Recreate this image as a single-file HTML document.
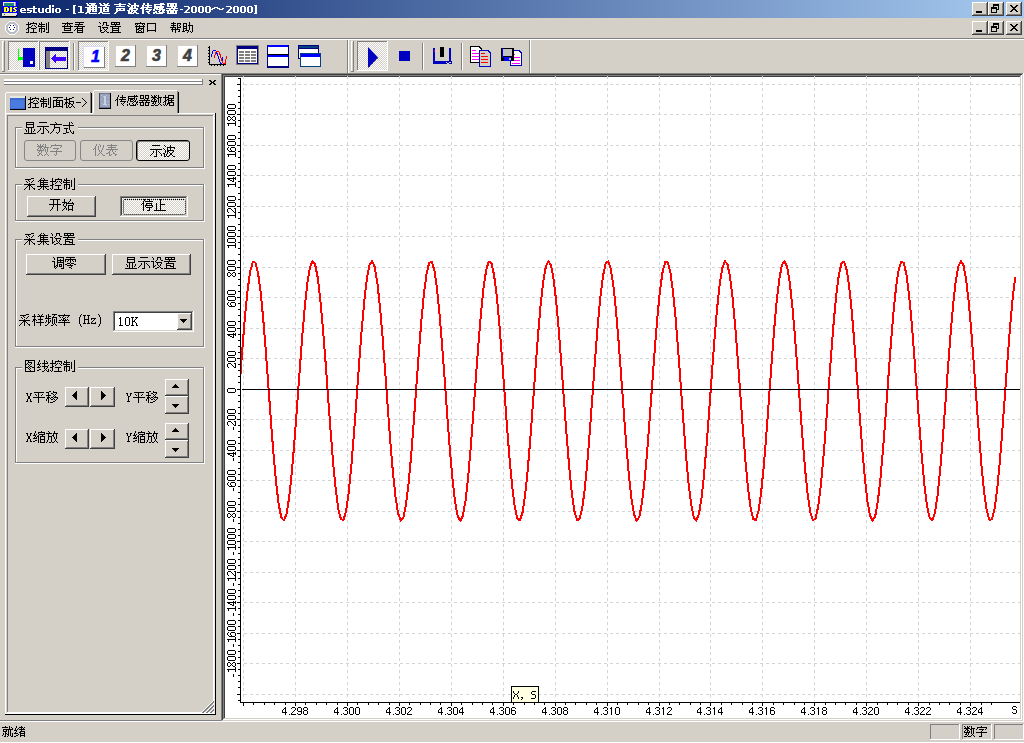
<!DOCTYPE html>
<html><head><meta charset="utf-8"><style>
html,body{margin:0;padding:0;width:1024px;height:743px;overflow:hidden;background:#d4d0c8}
body>div,body>svg,body>span{position:absolute;display:block}
body>span{white-space:nowrap}
svg{overflow:visible}
</style></head><body>
<div style="left:0px;top:0px;width:1024px;height:743px;background:#d4d0c8;"></div>
<div style="left:0px;top:0px;width:1024px;height:18px;background:linear-gradient(90deg,#0a246a,#a6caf0);"></div>
<svg style="left:0px;top:0px" width="20" height="18" shape-rendering="crispEdges">
<rect x="2" y="1" width="16" height="15" fill="#0000f0"/>
<rect x="3" y="2" width="13" height="4" fill="#f0ece0"/>
<rect x="15" y="2" width="1" height="4" fill="#a8a098"/>
<rect x="4" y="3" width="10" height="3" fill="#208878"/>
<rect x="8" y="5" width="1" height="1" fill="#00ff00"/>
<rect x="3" y="6" width="15" height="7" fill="#0000ff"/>
<path fill="#ffff00" d="M4 7h4v1h-4zM4 8h2v3h-2zM7 8h2v3h-2zM4 11h4v1h-4zM10 7h2v5h-2zM14 7h3v1h-3zM13 8h2v1h-2zM14 9h2v1h-2zM15 10h2v1h-2zM13 11h3v1h-3z"/>
<rect x="2" y="12" width="1" height="2" fill="#000"/>
<rect x="2" y="13" width="15" height="3" fill="#e8e4d8"/>
<rect x="4" y="14" width="1" height="1" fill="#008000"/>
<rect x="3" y="16" width="14" height="1" fill="#000"/>
<rect x="16" y="15" width="1" height="1" fill="#000"/>
</svg>
<svg style="left:19px;top:-3px" width="70" height="24"><path fill="#fff" d="M33 8h2v2h-2zM14 9h2v2h-2zM30 8h2v3h-2zM1 12h2v1h-2zM27 11h5v1h-5zM37 11h4v1h-4zM54 8h3v1h-3zM30 12h2v3h-2zM33 11h2v5h-2zM54 16h3v1h-3zM14 12h2v3h-2zM54 9h2v7h-2zM59 9h4v1h-4zM61 10h2v5h-2zM2 11h4v1h-4zM8 11h10v1h-10zM19 11h2v4h-2zM23 11h2v4h-2zM27 15h5v1h-5zM37 15h4v1h-4zM1 14h2v1h-2zM5 12h2v1h-2zM8 12h2v1h-2zM26 12h2v3h-2zM36 12h2v3h-2zM40 12h2v3h-2zM47 12h3v1h-3zM1 13h6v1h-6zM8 13h5v1h-5zM11 14h2v1h-2zM2 15h5v1h-5zM8 15h4v1h-4zM14 15h4v1h-4zM20 15h5v1h-5zM59 15h6v1h-6z"/></svg>
<svg style="left:85px;top:1px" width="26" height="20"><path fill="#fff" d="M7 5h2v1h-2zM10 5h2v1h-2zM15 3h2v1h-2zM18 2h2v1h-2zM22 2h2v1h-2zM2 4h10v1h-10zM18 6h6v1h-6zM2 7h4v1h-4zM7 7h2v1h-2zM10 7h2v1h-2zM18 7h2v1h-2zM22 7h2v1h-2zM18 8h6v1h-6zM1 2h2v1h-2zM4 2h7v1h-7zM14 2h2v1h-2zM18 9h2v1h-2zM22 9h2v1h-2zM2 3h2v1h-2zM6 3h4v1h-4zM15 7h2v4h-2zM19 3h4v1h-4zM2 8h10v1h-10zM15 4h10v1h-10zM4 5h2v1h-2zM7 9h2v1h-2zM10 9h2v1h-2zM20 5h2v1h-2zM0 6h12v1h-12zM13 6h4v1h-4zM18 10h6v1h-6zM2 9h4v2h-4zM7 10h5v1h-5zM1 11h4v1h-4zM14 11h4v1h-4zM0 12h2v1h-2zM4 12h8v1h-8zM13 12h2v1h-2zM17 12h8v1h-8z"/></svg>
<svg style="left:114px;top:1px" width="65" height="20"><path fill="#fff" d="M5 2h2v1h-2zM14 2h2v1h-2zM20 2h2v2h-2zM33 2h2v2h-2zM53 2h10v1h-10zM2 5h9v1h-9zM5 4h2v1h-2zM28 4h2v2h-2zM31 4h7v1h-7zM2 7h9v1h-9zM52 7h12v1h-12zM2 8h2v1h-2zM14 5h2v1h-2zM17 5h2v1h-2zM20 5h2v2h-2zM53 3h2v2h-2zM56 3h4v2h-4zM61 3h2v2h-2zM33 5h2v1h-2zM39 8h2v2h-2zM53 5h10v1h-10zM5 8h2v1h-2zM14 10h2v1h-2zM20 10h2v1h-2zM29 2h2v2h-2zM33 11h2v1h-2zM46 2h4v1h-4zM53 12h10v1h-10zM0 3h12v1h-12zM15 3h2v1h-2zM40 3h11v1h-11zM53 10h2v2h-2zM56 10h4v2h-4zM61 10h2v2h-2zM13 4h2v1h-2zM17 4h8v1h-8zM28 8h2v5h-2zM31 8h7v1h-7zM40 4h2v1h-2zM46 4h2v1h-2zM2 9h9v1h-9zM17 10h2v1h-2zM23 5h2v1h-2zM40 5h10v2h-10zM16 6h3v1h-3zM27 6h11v1h-11zM57 6h2v1h-2zM60 6h2v1h-2zM15 7h9v1h-9zM26 7h4v1h-4zM32 7h2v1h-2zM40 7h4v1h-4zM45 7h4v1h-4zM52 9h12v1h-12zM2 10h2v1h-2zM9 8h2v1h-2zM15 8h4v1h-4zM22 8h2v1h-2zM39 12h2v1h-2zM42 8h9v1h-9zM55 8h2v1h-2zM59 8h2v1h-2zM13 9h3v1h-3zM17 9h6v1h-6zM35 9h2v1h-2zM45 9h2v1h-2zM48 9h3v1h-3zM32 10h4v1h-4zM41 10h2v1h-2zM44 10h2v1h-2zM48 10h2v1h-2zM1 11h2v1h-2zM14 11h4v1h-4zM19 11h4v1h-4zM39 11h4v1h-4zM45 11h6v1h-6zM0 12h2v1h-2zM14 12h6v1h-6zM22 12h3v1h-3zM34 12h2v1h-2zM42 12h7v1h-7z"/></svg>
<svg style="left:179px;top:-3px" width="37" height="24"><path fill="#fff" d="M13 9h4v1h-4zM20 9h4v1h-4zM27 9h4v1h-4zM5 9h5v1h-5zM13 15h4v1h-4zM20 15h4v1h-4zM27 15h4v1h-4zM9 10h2v2h-2zM12 10h2v5h-2zM16 10h2v5h-2zM19 10h2v5h-2zM23 10h2v5h-2zM26 10h2v5h-2zM30 10h2v5h-2zM1 12h3v1h-3zM8 12h2v1h-2zM7 13h2v1h-2zM6 14h2v1h-2zM5 15h6v1h-6z"/></svg>
<svg style="left:211px;top:1px" width="14" height="20"><path fill="#fff" d="M3 6h4v1h-4zM1 7h3v1h-3zM6 7h3v1h-3zM11 7h2v1h-2zM0 8h2v1h-2zM8 8h4v1h-4z"/></svg>
<svg style="left:225px;top:-3px" width="38" height="24"><path fill="#fff" d="M9 9h4v1h-4zM16 9h4v1h-4zM23 9h4v1h-4zM29 8h3v1h-3zM29 16h3v1h-3zM1 9h5v1h-5zM9 15h4v1h-4zM16 15h4v1h-4zM23 15h4v1h-4zM30 9h2v7h-2zM5 10h2v2h-2zM8 10h2v5h-2zM12 10h2v5h-2zM15 10h2v5h-2zM19 10h2v5h-2zM22 10h2v5h-2zM26 10h2v5h-2zM4 12h2v1h-2zM3 13h2v1h-2zM2 14h2v1h-2zM1 15h6v1h-6z"/></svg>
<div style="left:972px;top:2px;width:16px;height:14px;background:#d4d0c8;"></div>
<div style="left:972px;top:2px;width:15px;height:1px;background:#ffffff;"></div>
<div style="left:972px;top:2px;width:1px;height:13px;background:#ffffff;"></div>
<div style="left:972px;top:15px;width:16px;height:1px;background:#404040;"></div>
<div style="left:987px;top:2px;width:1px;height:14px;background:#404040;"></div>
<div style="left:973px;top:14px;width:14px;height:1px;background:#808080;"></div>
<div style="left:986px;top:3px;width:1px;height:12px;background:#808080;"></div>
<div style="left:976px;top:11px;width:6px;height:2px;background:#000;"></div>
<div style="left:988px;top:2px;width:16px;height:14px;background:#d4d0c8;"></div>
<div style="left:988px;top:2px;width:15px;height:1px;background:#ffffff;"></div>
<div style="left:988px;top:2px;width:1px;height:13px;background:#ffffff;"></div>
<div style="left:988px;top:15px;width:16px;height:1px;background:#404040;"></div>
<div style="left:1003px;top:2px;width:1px;height:14px;background:#404040;"></div>
<div style="left:989px;top:14px;width:14px;height:1px;background:#808080;"></div>
<div style="left:1002px;top:3px;width:1px;height:12px;background:#808080;"></div>
<svg style="left:988px;top:2px" width="16" height="14" shape-rendering="crispEdges"><path fill="#000" d="M5 2h6v2h-6zM5 4h1v1h-1zM10 4h1v4h-1zM9 7h1v1h-1zM3 5h6v2h-6zM3 7h1v4h-1zM8 7h1v4h-1zM3 10h6v1h-6z"/></svg>
<div style="left:1006px;top:2px;width:16px;height:14px;background:#d4d0c8;"></div>
<div style="left:1006px;top:2px;width:15px;height:1px;background:#ffffff;"></div>
<div style="left:1006px;top:2px;width:1px;height:13px;background:#ffffff;"></div>
<div style="left:1006px;top:15px;width:16px;height:1px;background:#404040;"></div>
<div style="left:1021px;top:2px;width:1px;height:14px;background:#404040;"></div>
<div style="left:1007px;top:14px;width:14px;height:1px;background:#808080;"></div>
<div style="left:1020px;top:3px;width:1px;height:12px;background:#808080;"></div>
<svg style="left:1006px;top:2px" width="16" height="14" shape-rendering="crispEdges"><path fill="#000" d="M4 3h2v1h-2zM10 3h2v1h-2zM5 4h2v1h-2zM9 4h2v1h-2zM6 5h4v1h-4zM7 6h2v1h-2zM6 7h4v1h-4zM5 8h2v1h-2zM9 8h2v1h-2zM4 9h2v1h-2zM10 9h2v1h-2z"/></svg>
<svg style="left:5px;top:21px" width="15" height="15" shape-rendering="crispEdges">
<path fill="#ffffff" d="M4 0h6v1h1v1h1v1h1v1h1v6h-1v1h-1v1h-1v1h-1v1h-6v-1h-1v-1h-1v-1h-1v-1h-1v-6h1v-1h1v-1h1v-1h1z"/>
<path fill="#bcbcc4" d="M4 1h6v1h1v1h1v1h1v6h-1v1h-1v1h-1v1h-6v-1h-1v-1h-1v-1h-1v-6h1v-1h1v-1h1z"/>
<path fill="#ffffff" d="M5 3h4v1h1v1h1v4h-1v1h-1v1h-4v-1h-1v-1h-1v-4h1v-1h1z"/>
<path fill="#000080" d="M5 4h1v1h-1zM8 4h1v1h-1zM4 6h1v1h-1zM9 6h1v1h-1zM5 8h1v1h-1zM8 8h1v1h-1z"/>
</svg>
<svg style="left:26px;top:20px" width="24" height="20"><path fill="#000" d="M2 2h1v2h-1zM15 2h1v2h-1zM10 4h1v1h-1zM15 5h1v1h-1zM13 4h6v1h-6zM2 5h1v2h-1zM7 2h1v1h-1zM13 3h1v1h-1zM15 7h1v1h-1zM4 3h7v1h-7zM2 9h1v3h-1zM7 9h1v3h-1zM15 9h1v4h-1zM22 2h1v10h-1zM4 12h7v1h-7zM13 9h1v3h-1zM20 3h1v7h-1zM0 4h5v1h-5zM10 7h1v1h-1zM13 8h6v1h-6zM6 5h1v1h-1zM8 5h1v1h-1zM12 5h1v1h-1zM5 6h1v1h-1zM9 6h1v1h-1zM12 6h7v1h-7zM2 7h3v1h-3zM1 8h2v1h-2zM5 8h5v1h-5zM0 9h1v1h-1zM18 9h1v2h-1zM17 11h2v1h-2zM0 12h3v1h-3zM20 12h3v1h-3z"/></svg>
<svg style="left:62px;top:20px" width="24" height="20"><path fill="#000" d="M5 2h1v1h-1zM0 3h11v1h-11zM2 5h1v1h-1zM8 5h1v1h-1zM2 7h1v1h-1zM8 7h1v1h-1zM15 7h1v1h-1zM20 7h1v1h-1zM2 8h7v1h-7zM15 9h1v1h-1zM20 9h1v1h-1zM0 6h11v1h-11zM15 10h6v1h-6zM5 4h1v2h-1zM13 2h9v1h-9zM0 12h11v1h-11zM17 3h1v1h-1zM3 4h1v1h-1zM7 4h1v1h-1zM13 4h8v1h-8zM2 9h1v1h-1zM8 9h1v1h-1zM16 5h1v1h-1zM12 6h11v1h-11zM15 11h1v1h-1zM20 11h1v1h-1zM2 10h7v1h-7zM14 8h7v1h-7zM13 9h1v1h-1zM12 10h1v1h-1zM15 12h6v1h-6z"/></svg>
<svg style="left:98px;top:20px" width="24" height="20"><path fill="#000" d="M13 2h9v1h-9zM2 3h1v1h-1zM5 3h1v2h-1zM8 3h1v2h-1zM14 7h1v1h-1zM20 7h1v1h-1zM14 8h7v1h-7zM2 7h1v3h-1zM6 9h1v1h-1zM8 9h1v1h-1zM14 9h1v1h-1zM20 9h1v1h-1zM12 6h11v1h-11zM1 2h1v1h-1zM5 2h4v1h-4zM13 4h9v1h-9zM2 11h1v1h-1zM5 8h1v1h-1zM8 11h1v1h-1zM13 3h1v1h-1zM16 3h1v1h-1zM18 3h1v1h-1zM21 3h1v1h-1zM4 5h1v1h-1zM8 5h3v1h-3zM17 5h1v1h-1zM0 6h3v1h-3zM12 12h11v1h-11zM4 7h6v1h-6zM14 11h1v1h-1zM20 11h1v1h-1zM9 8h1v1h-1zM14 10h7v1h-7zM6 11h1v1h-1zM2 10h2v1h-2zM7 10h1v1h-1zM3 12h3v1h-3zM9 12h2v1h-2z"/></svg>
<svg style="left:134px;top:20px" width="23" height="20"><path fill="#000" d="M1 3h10v1h-10zM2 5h1v1h-1zM5 5h1v1h-1zM9 5h1v1h-1zM9 7h1v1h-1zM2 7h1v2h-1zM13 3h9v1h-9zM7 9h1v1h-1zM13 4h1v6h-1zM21 4h1v6h-1zM6 2h1v1h-1zM1 6h10v1h-10zM13 10h9v1h-9zM1 4h1v1h-1zM3 4h1v1h-1zM8 4h1v1h-1zM10 4h1v1h-1zM13 11h1v1h-1zM21 11h1v1h-1zM2 10h1v2h-1zM5 7h1v1h-1zM9 9h1v3h-1zM4 8h6v1h-6zM2 9h3v1h-3zM7 11h1v1h-1zM5 10h2v1h-2zM4 11h1v1h-1zM2 12h8v1h-8z"/></svg>
<svg style="left:170px;top:20px" width="24" height="20"><path fill="#000" d="M3 2h1v1h-1zM1 3h5v1h-5zM3 4h1v1h-1zM10 4h1v1h-1zM13 3h4v1h-4zM19 2h1v3h-1zM7 3h4v1h-4zM13 4h1v2h-1zM16 4h1v2h-1zM7 4h1v3h-1zM13 6h4v1h-4zM13 7h1v1h-1zM16 7h1v1h-1zM2 8h1v1h-1zM5 8h1v1h-1zM9 5h1v1h-1zM3 6h1v1h-1zM19 6h1v4h-1zM1 5h5v1h-5zM7 7h4v1h-4zM13 8h4v1h-4zM7 8h1v1h-1zM10 6h1v1h-1zM13 9h1v2h-1zM16 9h1v1h-1zM9 10h1v1h-1zM18 5h5v1h-5zM22 6h1v6h-1zM0 7h6v1h-6zM2 10h1v2h-1zM5 10h1v3h-1zM1 9h9v1h-9zM15 10h4v1h-4zM8 11h2v1h-2zM12 11h3v1h-3zM18 11h1v1h-1zM20 11h1v1h-1zM17 12h1v1h-1zM21 12h1v1h-1z"/></svg>
<div style="left:972px;top:21px;width:16px;height:14px;background:#d4d0c8;"></div>
<div style="left:972px;top:21px;width:15px;height:1px;background:#ffffff;"></div>
<div style="left:972px;top:21px;width:1px;height:13px;background:#ffffff;"></div>
<div style="left:972px;top:34px;width:16px;height:1px;background:#404040;"></div>
<div style="left:987px;top:21px;width:1px;height:14px;background:#404040;"></div>
<div style="left:973px;top:33px;width:14px;height:1px;background:#808080;"></div>
<div style="left:986px;top:22px;width:1px;height:12px;background:#808080;"></div>
<div style="left:976px;top:30px;width:6px;height:2px;background:#000;"></div>
<div style="left:988px;top:21px;width:16px;height:14px;background:#d4d0c8;"></div>
<div style="left:988px;top:21px;width:15px;height:1px;background:#ffffff;"></div>
<div style="left:988px;top:21px;width:1px;height:13px;background:#ffffff;"></div>
<div style="left:988px;top:34px;width:16px;height:1px;background:#404040;"></div>
<div style="left:1003px;top:21px;width:1px;height:14px;background:#404040;"></div>
<div style="left:989px;top:33px;width:14px;height:1px;background:#808080;"></div>
<div style="left:1002px;top:22px;width:1px;height:12px;background:#808080;"></div>
<svg style="left:988px;top:21px" width="16" height="14" shape-rendering="crispEdges"><path fill="#000" d="M5 2h6v2h-6zM5 4h1v1h-1zM10 4h1v4h-1zM9 7h1v1h-1zM3 5h6v2h-6zM3 7h1v4h-1zM8 7h1v4h-1zM3 10h6v1h-6z"/></svg>
<div style="left:1006px;top:21px;width:16px;height:14px;background:#d4d0c8;"></div>
<div style="left:1006px;top:21px;width:15px;height:1px;background:#ffffff;"></div>
<div style="left:1006px;top:21px;width:1px;height:13px;background:#ffffff;"></div>
<div style="left:1006px;top:34px;width:16px;height:1px;background:#404040;"></div>
<div style="left:1021px;top:21px;width:1px;height:14px;background:#404040;"></div>
<div style="left:1007px;top:33px;width:14px;height:1px;background:#808080;"></div>
<div style="left:1020px;top:22px;width:1px;height:12px;background:#808080;"></div>
<svg style="left:1006px;top:21px" width="16" height="14" shape-rendering="crispEdges"><path fill="#000" d="M4 3h2v1h-2zM10 3h2v1h-2zM5 4h2v1h-2zM9 4h2v1h-2zM6 5h4v1h-4zM7 6h2v1h-2zM6 7h4v1h-4zM5 8h2v1h-2zM9 8h2v1h-2zM4 9h2v1h-2zM10 9h2v1h-2z"/></svg>
<div style="left:0px;top:38px;width:1024px;height:1px;background:#808080;"></div>
<div style="left:0px;top:39px;width:1024px;height:1px;background:#ffffff;"></div>
<div style="left:2px;top:41px;width:1px;height:30px;background:#ffffff;"></div>
<div style="left:2px;top:41px;width:2px;height:1px;background:#ffffff;"></div>
<div style="left:4px;top:41px;width:1px;height:31px;background:#808080;"></div>
<div style="left:2px;top:71px;width:3px;height:1px;background:#808080;"></div>
<div style="left:9px;top:42px;width:29px;height:28px;background-color:#fff;background-image:conic-gradient(#d4d0c8 25%,#fff 0 50%,#d4d0c8 0 75%,#fff 0);background-size:2px 2px"></div>
<div style="left:8px;top:41px;width:31px;height:1px;background:#808080;"></div>
<div style="left:8px;top:41px;width:1px;height:29px;background:#808080;"></div>
<div style="left:8px;top:70px;width:31px;height:1px;background:#ffffff;"></div>
<div style="left:38px;top:41px;width:1px;height:30px;background:#ffffff;"></div>
<svg style="left:8px;top:41px" width="31" height="31" shape-rendering="crispEdges">
<rect x="15" y="7" width="12" height="19" fill="#0000c0"/>
<rect x="22" y="20" width="3" height="3" fill="#fff"/>
<rect x="10" y="8" width="1" height="12" fill="#00ff00"/>
<rect x="10" y="16" width="5" height="3" fill="#00ff00"/>
</svg>
<div style="left:40px;top:42px;width:29px;height:28px;background-color:#fff;background-image:conic-gradient(#d4d0c8 25%,#fff 0 50%,#d4d0c8 0 75%,#fff 0);background-size:2px 2px"></div>
<div style="left:39px;top:41px;width:31px;height:1px;background:#808080;"></div>
<div style="left:39px;top:41px;width:1px;height:29px;background:#808080;"></div>
<div style="left:39px;top:70px;width:31px;height:1px;background:#ffffff;"></div>
<div style="left:69px;top:41px;width:1px;height:30px;background:#ffffff;"></div>
<svg style="left:39px;top:41px" width="31" height="31" shape-rendering="crispEdges">
<path fill="#000080" d="M6 6h23v22h-23zM7 10v17h21v-17z"/>
<rect x="7" y="10" width="4" height="17" fill="#808080"/>
<path fill="#4000ff" d="M12 17.5l5-5v3h10v4h-10v3z"/>
</svg>
<div style="left:73px;top:43px;width:1px;height:27px;background:#808080;"></div>
<div style="left:74px;top:43px;width:1px;height:27px;background:#ffffff;"></div>
<div style="left:79px;top:42px;width:29px;height:28px;background-color:#fff;background-image:conic-gradient(#d4d0c8 25%,#fff 0 50%,#d4d0c8 0 75%,#fff 0);background-size:2px 2px"></div>
<div style="left:78px;top:41px;width:31px;height:1px;background:#808080;"></div>
<div style="left:78px;top:41px;width:1px;height:29px;background:#808080;"></div>
<div style="left:78px;top:70px;width:31px;height:1px;background:#ffffff;"></div>
<div style="left:108px;top:41px;width:1px;height:30px;background:#ffffff;"></div>
<svg style="left:83px;top:46px" width="22" height="22" shape-rendering="crispEdges">
<rect x="0" y="0" width="21" height="21" fill="#d8d8f8"/>
<rect x="1" y="1" width="20" height="20" fill="#fff"/>
<rect x="21" y="1" width="1" height="21" fill="#808080"/>
<rect x="1" y="21" width="21" height="1" fill="#808080"/>
</svg>
<span style="left:91px;top:47.5px;font:italic bold 16px/18px 'Liberation Sans',sans-serif;color:#0000ff;-webkit-text-stroke:0.6px #0000ff">1</span>
<svg style="left:115px;top:45px" width="21" height="22" shape-rendering="crispEdges"><rect x="1" y="1" width="19" height="20" fill="#fff"/><rect x="20" y="0" width="1" height="22" fill="#808080"/><rect x="0" y="21" width="21" height="1" fill="#808080"/></svg>
<span style="left:121px;top:47px;font:italic bold 16px/18px 'Liberation Sans',sans-serif;color:#404040;-webkit-text-stroke:0.6px #404040">2</span>
<svg style="left:146px;top:45px" width="21" height="22" shape-rendering="crispEdges"><rect x="1" y="1" width="19" height="20" fill="#fff"/><rect x="20" y="0" width="1" height="22" fill="#808080"/><rect x="0" y="21" width="21" height="1" fill="#808080"/></svg>
<span style="left:152px;top:47px;font:italic bold 16px/18px 'Liberation Sans',sans-serif;color:#404040;-webkit-text-stroke:0.6px #404040">3</span>
<svg style="left:177px;top:45px" width="21" height="22" shape-rendering="crispEdges"><rect x="1" y="1" width="19" height="20" fill="#fff"/><rect x="20" y="0" width="1" height="22" fill="#808080"/><rect x="0" y="21" width="21" height="1" fill="#808080"/></svg>
<span style="left:183px;top:47px;font:italic bold 16px/18px 'Liberation Sans',sans-serif;color:#404040;-webkit-text-stroke:0.6px #404040">4</span>
<svg style="left:204px;top:42px" width="28" height="28" shape-rendering="crispEdges"><path fill="#000" d="M5 4h1v19h-1zM5 22h17v1h-17z"/><path fill="#000" d="M4 5h1v1h-1zM4 8h1v1h-1zM4 11h1v1h-1zM4 14h1v1h-1zM4 17h1v1h-1zM4 20h1v1h-1zM7 23h1v1h-1zM10 23h1v1h-1zM13 23h1v1h-1zM16 23h1v1h-1zM19 23h1v1h-1z"/><path fill="#0000ff" d="M7 12h1v3h-1zM8 9h1v3h-1zM9 8h1v1h-1zM10 8h1v1h-1zM11 8h1v1h-1zM12 9h1v1h-1zM12 10h1v2h-1zM13 11h1v3h-1zM14 14h1v3h-1zM15 17h1v3h-1zM16 20h1v2h-1zM17 21h1v1h-1zM18 19h1v2h-1zM18 15h1v4h-1z"/><path fill="#ff0000" d="M10 13h1v3h-1zM11 10h1v3h-1zM12 9h1v1h-1zM13 9h1v1h-1zM14 9h1v1h-1zM15 10h1v1h-1zM15 11h1v2h-1zM16 12h1v4h-1zM17 16h1v3h-1zM18 19h1v2h-1zM19 21h1v1h-1zM20 21h1v1h-1zM21 20h1v2h-1zM21 17h1v3h-1zM22 14h1v3h-1z"/></svg>
<svg style="left:236px;top:45px" width="24" height="21" shape-rendering="crispEdges">
<rect x="0" y="0" width="23" height="20" fill="#808080"/>
<rect x="1" y="1" width="21" height="18" fill="#000080"/>
<rect x="1" y="19" width="22" height="1" fill="#808080"/>
<rect x="2" y="4" width="19" height="14" fill="#fff"/>
<path fill="#808080" d="M3 6h5v2h-5zM9 6h5v2h-5zM15 6h5v2h-5zM3 9h5v2h-5zM9 9h5v2h-5zM15 9h5v2h-5zM3 12h5v2h-5zM9 12h5v2h-5zM15 12h5v2h-5zM3 15h5v2h-5zM9 15h5v2h-5zM15 15h5v2h-5z"/>
</svg>
<svg style="left:267px;top:45px" width="22" height="23" shape-rendering="crispEdges">
<rect x="0" y="0" width="22" height="23" fill="#000080"/>
<rect x="1" y="0" width="20" height="2" fill="#0000ff"/>
<rect x="1" y="2" width="20" height="7" fill="#fff"/>
<rect x="0" y="9" width="22" height="1" fill="#000"/>
<rect x="1" y="10" width="20" height="2" fill="#0000ff"/>
<rect x="1" y="12" width="20" height="9" fill="#fff"/>
</svg>
<svg style="left:298px;top:45px" width="24" height="23" shape-rendering="crispEdges">
<rect x="0" y="0" width="21" height="14" fill="#000080"/>
<rect x="1" y="1" width="19" height="2" fill="#004080"/>
<rect x="1" y="4" width="19" height="9" fill="#fff"/>
<rect x="2" y="8" width="21" height="14" fill="#004080"/>
<rect x="3" y="9" width="19" height="3" fill="#0000ff"/>
<rect x="3" y="12" width="19" height="9" fill="#fff"/>
</svg>
<div style="left:347px;top:40px;width:1px;height:33px;background:#808080;"></div>
<div style="left:348px;top:40px;width:1px;height:33px;background:#ffffff;"></div>
<div style="left:351px;top:41px;width:1px;height:30px;background:#ffffff;"></div>
<div style="left:351px;top:41px;width:2px;height:1px;background:#ffffff;"></div>
<div style="left:353px;top:41px;width:1px;height:31px;background:#808080;"></div>
<div style="left:351px;top:71px;width:3px;height:1px;background:#808080;"></div>
<div style="left:358px;top:42px;width:29px;height:28px;background-color:#fff;background-image:conic-gradient(#d4d0c8 25%,#fff 0 50%,#d4d0c8 0 75%,#fff 0);background-size:2px 2px"></div>
<div style="left:357px;top:41px;width:31px;height:1px;background:#808080;"></div>
<div style="left:357px;top:41px;width:1px;height:29px;background:#808080;"></div>
<div style="left:357px;top:70px;width:31px;height:1px;background:#ffffff;"></div>
<div style="left:387px;top:41px;width:1px;height:30px;background:#ffffff;"></div>
<svg style="left:357px;top:41px" width="31" height="31">
<path d="M11 6L21 16.5L11 27z" fill="#0000c0"/>
<path d="M12 26L21 17" stroke="#000" stroke-width="1" stroke-dasharray="1 3" fill="none"/>
</svg>
<div style="left:399px;top:51px;width:11px;height:10px;background:#0000c0;"></div>
<div style="left:422px;top:43px;width:1px;height:27px;background:#808080;"></div>
<div style="left:423px;top:43px;width:1px;height:27px;background:#ffffff;"></div>
<svg style="left:432px;top:46px" width="22" height="20" shape-rendering="crispEdges">
<rect x="1" y="2" width="2" height="16" fill="#0000c0"/>
<rect x="1" y="15" width="19" height="3" fill="#0000c0"/>
<rect x="17" y="2" width="2" height="16" fill="#0000c0"/>
<rect x="8" y="1" width="4" height="10" fill="#000"/>
<path fill="#e8e8e8" d="M14 16h1v1h-1zM17 16h2v1h-2zM15 17h2v1h-2z"/>
<rect x="2" y="4" width="1" height="2" fill="#c00060"/>
</svg>
<div style="left:461px;top:43px;width:1px;height:27px;background:#808080;"></div>
<div style="left:462px;top:43px;width:1px;height:27px;background:#ffffff;"></div>
<svg style="left:470px;top:46px" width="24" height="22" shape-rendering="crispEdges">
<path fill="#000" d="M0 0h9l3 3v14h-12z"/>
<path fill="#fff" d="M1 1h7l3 3v12h-10z"/>
<path fill="#ff00ff" d="M2 4h4v1h-4zM2 7h7v1h-7zM2 10h7v1h-7zM2 13h7v1h-7z"/>
<path fill="#0000c0" d="M9 4h9l3 3v14h-12z"/>
<path fill="#d4d0c8" d="M10 5h7l3 3v12h-10z"/>
<path fill="#ff0000" d="M11 7h4v1h-4zM11 10h7v1h-7zM11 13h7v1h-7zM11 16h7v1h-7z"/>
</svg>
<svg style="left:500px;top:47px" width="24" height="21" shape-rendering="crispEdges">
<path fill="#0000c0" d="M10 3h9l3 3v13h-12z"/>
<path fill="#fff" d="M11 4h7l3 3v11h-10z"/>
<path fill="#ff00ff" d="M12 7h3v1h-3zM12 10h8v1h-8zM12 13h8v1h-8zM12 16h8v1h-8z"/>
<rect x="1" y="1" width="13" height="13" fill="#000"/>
<rect x="3" y="2" width="9" height="7" fill="#c0c0c0"/>
<rect x="2" y="1" width="1" height="10" fill="#0000ff"/>
<rect x="4" y="10" width="7" height="4" fill="#0000ff"/>
<rect x="9" y="11" width="2" height="2" fill="#c0c0c0"/>
</svg>
<div style="left:529px;top:40px;width:1px;height:33px;background:#808080;"></div>
<div style="left:530px;top:40px;width:1px;height:33px;background:#ffffff;"></div>
<div style="left:0px;top:73px;width:1024px;height:1px;background:#808080;"></div>
<div style="left:0px;top:74px;width:221px;height:1px;background:#ffffff;"></div>
<div style="left:4px;top:79px;width:198px;height:2px;background:#ffffff;"></div>
<div style="left:4px;top:81px;width:199px;height:1px;background:#808080;"></div>
<div style="left:4px;top:82px;width:198px;height:2px;background:#ffffff;"></div>
<div style="left:4px;top:84px;width:199px;height:1px;background:#808080;"></div>
<div style="left:202px;top:79px;width:1px;height:3px;background:#808080;"></div>
<div style="left:202px;top:82px;width:1px;height:3px;background:#808080;"></div>
<svg style="left:209px;top:80px" width="8" height="7" shape-rendering="crispEdges"><path fill="#000" d="M0 0h2v1h-2zM5 0h2v1h-2zM1 1h2v1h-2zM4 1h2v1h-2zM2 2h3v1h-3zM1 3h2v1h-2zM4 3h2v1h-2zM0 4h2v1h-2zM5 4h2v1h-2z"/></svg>
<div style="left:5px;top:113px;width:1px;height:602px;background:#ffffff;"></div>
<div style="left:5px;top:113px;width:210px;height:1px;background:#ffffff;"></div>
<div style="left:215px;top:113px;width:1px;height:602px;background:#000;"></div>
<div style="left:5px;top:714px;width:211px;height:1px;background:#000;"></div>
<div style="left:7px;top:115px;width:1px;height:597px;background:#808080;"></div>
<div style="left:7px;top:115px;width:206px;height:1px;background:#808080;"></div>
<div style="left:213px;top:115px;width:1px;height:598px;background:#ffffff;"></div>
<div style="left:214px;top:114px;width:1px;height:600px;background:#eae8e2;"></div>
<div style="left:7px;top:712px;width:207px;height:1px;background:#ffffff;"></div>
<div style="left:6px;top:713px;width:209px;height:1px;background:#ffffff;"></div>
<svg style="left:201px;top:700px" width="13" height="13" shape-rendering="crispEdges"><path fill="#fff" d="M12 0h1v1h-1zM11 1h1v1h-1zM10 2h1v1h-1zM9 3h1v1h-1zM8 4h1v1h-1zM12 4h1v1h-1zM7 5h1v1h-1zM11 5h1v1h-1zM6 6h1v1h-1zM10 6h1v1h-1zM5 7h1v1h-1zM9 7h1v1h-1zM4 8h1v1h-1zM8 8h1v1h-1zM12 8h1v1h-1zM3 9h1v1h-1zM7 9h1v1h-1zM11 9h1v1h-1zM2 10h1v1h-1zM6 10h1v1h-1zM10 10h1v1h-1zM1 11h1v1h-1zM5 11h1v1h-1zM9 11h1v1h-1zM0 12h1v1h-1zM4 12h1v1h-1zM8 12h1v1h-1z"/><path fill="#808080" d="M12 1h1v1h-1zM11 2h1v1h-1zM12 2h1v1h-1zM10 3h1v1h-1zM11 3h1v1h-1zM9 4h1v1h-1zM10 4h1v1h-1zM8 5h1v1h-1zM9 5h1v1h-1zM12 5h1v1h-1zM7 6h1v1h-1zM8 6h1v1h-1zM11 6h1v1h-1zM12 6h1v1h-1zM6 7h1v1h-1zM7 7h1v1h-1zM10 7h1v1h-1zM11 7h1v1h-1zM5 8h1v1h-1zM6 8h1v1h-1zM9 8h1v1h-1zM10 8h1v1h-1zM4 9h1v1h-1zM5 9h1v1h-1zM8 9h1v1h-1zM9 9h1v1h-1zM12 9h1v1h-1zM3 10h1v1h-1zM4 10h1v1h-1zM7 10h1v1h-1zM8 10h1v1h-1zM11 10h1v1h-1zM12 10h1v1h-1zM2 11h1v1h-1zM3 11h1v1h-1zM6 11h1v1h-1zM7 11h1v1h-1zM10 11h1v1h-1zM11 11h1v1h-1zM1 12h1v1h-1zM2 12h1v1h-1zM5 12h1v1h-1zM6 12h1v1h-1zM9 12h1v1h-1zM10 12h1v1h-1z"/></svg>
<div style="left:5px;top:93px;width:1px;height:20px;background:#ffffff;"></div>
<div style="left:6px;top:92px;width:84px;height:1px;background:#ffffff;"></div>
<div style="left:90px;top:92px;width:1px;height:21px;background:#808080;"></div>
<div style="left:91px;top:93px;width:1px;height:20px;background:#000;"></div>
<svg style="left:10px;top:96px" width="16" height="14" shape-rendering="crispEdges">
<rect x="0" y="0" width="16" height="14" fill="#000"/>
<rect x="0" y="0" width="15" height="2" fill="#e8e8e0"/>
<rect x="0" y="2" width="15" height="11" fill="#3c6cd0"/>
<rect x="1" y="4" width="13" height="8" fill="#4a7ce0"/>
</svg>
<svg style="left:28px;top:95px" width="60" height="20"><path fill="#000" d="M2 2h1v2h-1zM15 2h1v2h-1zM25 2h10v1h-10zM38 2h1v2h-1zM28 4h1v1h-1zM10 4h1v1h-1zM15 5h1v1h-1zM41 5h1v1h-1zM13 4h6v1h-6zM28 6h1v1h-1zM31 6h1v1h-1zM57 6h1v1h-1zM2 5h1v2h-1zM7 2h1v1h-1zM13 3h1v1h-1zM15 7h1v1h-1zM28 7h4v1h-4zM38 5h1v2h-1zM41 7h1v1h-1zM56 5h1v1h-1zM28 8h1v1h-1zM31 8h1v1h-1zM55 4h1v1h-1zM25 5h10v1h-10zM45 7h1v2h-1zM54 3h1v1h-1zM4 3h7v1h-7zM25 6h1v5h-1zM34 6h1v5h-1zM2 9h1v3h-1zM7 9h1v3h-1zM15 9h1v4h-1zM22 2h1v10h-1zM25 11h10v1h-10zM38 9h1v3h-1zM44 2h2v1h-2zM4 12h7v1h-7zM13 9h1v3h-1zM20 3h1v7h-1zM29 3h1v1h-1zM41 3h3v1h-3zM54 11h1v1h-1zM0 4h5v1h-5zM10 7h1v1h-1zM13 8h6v1h-6zM28 10h1v1h-1zM36 4h6v1h-6zM55 10h1v1h-1zM6 5h1v1h-1zM8 5h1v1h-1zM12 5h1v1h-1zM41 9h1v1h-1zM56 9h1v1h-1zM5 6h1v1h-1zM9 6h1v1h-1zM12 6h7v1h-7zM25 12h1v1h-1zM31 10h1v1h-1zM34 12h1v1h-1zM41 6h5v1h-5zM57 8h1v1h-1zM2 7h3v1h-3zM28 9h4v1h-4zM37 7h3v1h-3zM45 11h1v1h-1zM48 7h5v1h-5zM58 7h1v1h-1zM1 8h2v1h-2zM5 8h5v1h-5zM37 8h2v1h-2zM40 8h3v1h-3zM0 9h1v1h-1zM18 9h1v2h-1zM36 9h1v1h-1zM43 9h2v1h-2zM40 10h1v2h-1zM44 10h1v1h-1zM17 11h2v1h-2zM43 11h1v1h-1zM0 12h3v1h-3zM20 12h3v1h-3zM38 12h2v1h-2zM41 12h2v1h-2zM46 12h1v1h-1z"/></svg>
<div style="left:93px;top:90px;width:85px;height:24px;background:#d4d0c8;"></div>
<div style="left:93px;top:91px;width:1px;height:22px;background:#ffffff;"></div>
<div style="left:94px;top:90px;width:83px;height:1px;background:#ffffff;"></div>
<div style="left:177px;top:91px;width:1px;height:22px;background:#808080;"></div>
<div style="left:178px;top:92px;width:1px;height:21px;background:#000;"></div>
<svg style="left:99px;top:93px" width="12" height="16" shape-rendering="crispEdges">
<rect x="0" y="0" width="12" height="16" fill="#000"/>
<rect x="0" y="0" width="11" height="15" fill="#707898"/>
<rect x="1" y="1" width="10" height="13" fill="#9aa2bc"/>
<path fill="#b8c0d8" d="M2 2h1v1h-1zM4 3h1v1h-1zM7 2h1v1h-1zM9 4h1v1h-1zM2 6h1v1h-1zM8 8h1v1h-1zM3 10h1v1h-1zM6 12h1v1h-1zM9 11h1v1h-1z"/>
<path fill="#c8d0e4" d="M5 3h2v9h-2zM4 11h4v1h-4z"/>
<rect x="0" y="0" width="1" height="15" fill="#404860"/>
</svg>
<svg style="left:115px;top:93px" width="60" height="20"><path fill="#000" d="M19 2h1v1h-1zM7 2h1v2h-1zM21 2h1v1h-1zM25 2h4v1h-4zM30 2h4v1h-4zM50 2h1v2h-1zM53 2h6v1h-6zM13 4h1v1h-1zM19 4h1v1h-1zM37 3h1v1h-1zM39 3h2v1h-2zM43 2h1v2h-1zM2 4h1v2h-1zM36 2h1v1h-1zM39 2h1v1h-1zM41 2h1v1h-1zM53 5h6v1h-6zM5 4h6v1h-6zM15 6h3v1h-3zM36 4h6v1h-6zM53 3h1v1h-1zM56 6h1v1h-1zM18 7h1v1h-1zM50 5h1v2h-1zM53 7h6v1h-6zM6 7h1v1h-1zM21 5h1v2h-1zM25 3h1v2h-1zM28 3h1v2h-1zM30 3h1v2h-1zM33 3h1v2h-1zM58 3h1v2h-1zM7 5h1v1h-1zM12 8h1v2h-1zM18 9h1v1h-1zM20 7h1v1h-1zM22 8h1v1h-1zM39 7h1v1h-1zM43 6h1v4h-1zM45 5h1v5h-1zM48 9h1v1h-1zM8 10h1v1h-1zM25 5h4v1h-4zM30 5h4v1h-4zM3 2h1v2h-1zM7 11h1v1h-1zM19 6h1v1h-1zM21 10h1v1h-1zM25 12h4v1h-4zM30 12h4v1h-4zM36 7h1v1h-1zM39 11h1v1h-1zM41 7h1v1h-1zM43 11h1v1h-1zM50 9h1v3h-1zM53 9h6v1h-6zM13 3h10v1h-10zM25 10h1v2h-1zM28 10h1v2h-1zM30 10h1v2h-1zM33 10h1v2h-1zM37 6h1v1h-1zM39 6h2v1h-2zM53 8h1v1h-1zM58 10h1v2h-1zM2 7h1v6h-1zM5 8h6v1h-6zM13 6h1v2h-1zM36 8h6v1h-6zM43 4h4v1h-4zM48 4h6v1h-6zM13 5h7v1h-7zM38 5h2v1h-2zM42 5h2v1h-2zM45 11h1v1h-1zM1 6h2v1h-2zM4 6h7v1h-7zM15 8h3v1h-3zM29 6h1v1h-1zM32 6h1v1h-1zM52 6h2v1h-2zM56 8h1v1h-1zM0 7h1v1h-1zM6 10h1v1h-1zM15 7h1v1h-1zM18 11h1v1h-1zM20 11h1v1h-1zM24 7h11v1h-11zM50 7h2v1h-2zM12 11h1v2h-1zM19 8h2v1h-2zM22 11h1v1h-1zM27 8h1v1h-1zM31 8h1v1h-1zM49 8h2v1h-2zM9 9h1v1h-1zM21 9h2v1h-2zM24 9h5v1h-5zM30 9h5v1h-5zM38 9h1v1h-1zM40 9h1v2h-1zM48 11h1v1h-1zM8 12h1v1h-1zM14 10h1v2h-1zM17 10h1v1h-1zM37 10h2v1h-2zM44 10h1v1h-1zM52 10h3v1h-3zM52 11h1v1h-1zM54 11h1v1h-1zM15 12h6v1h-6zM36 12h3v1h-3zM40 12h3v1h-3zM46 12h1v1h-1zM49 12h1v1h-1zM51 12h1v1h-1zM54 12h5v1h-5z"/></svg>
<div style="left:15px;top:127px;width:189px;height:1px;background:#808080;"></div>
<div style="left:15px;top:127px;width:1px;height:41px;background:#808080;"></div>
<div style="left:16px;top:128px;width:187px;height:1px;background:#ffffff;"></div>
<div style="left:16px;top:128px;width:1px;height:39px;background:#ffffff;"></div>
<div style="left:15px;top:167px;width:189px;height:1px;background:#808080;"></div>
<div style="left:15px;top:168px;width:190px;height:1px;background:#ffffff;"></div>
<div style="left:203px;top:127px;width:1px;height:41px;background:#808080;"></div>
<div style="left:204px;top:127px;width:1px;height:42px;background:#ffffff;"></div>
<div style="left:22px;top:121px;width:56px;height:12px;background:#d4d0c8;"></div>
<svg style="left:24px;top:120px" width="51" height="21"><path fill="#000" d="M2 2h8v1h-8zM2 3h1v1h-1zM9 3h1v1h-1zM45 2h1v3h-1zM2 4h8v1h-8zM30 5h1v2h-1zM2 5h1v2h-1zM9 5h1v2h-1zM32 3h1v1h-1zM47 2h1v1h-1zM2 7h8v1h-8zM15 2h8v1h-8zM31 2h1v1h-1zM45 6h1v4h-1zM47 12h1v1h-1zM2 10h1v2h-1zM9 11h1v1h-1zM32 12h1v1h-1zM48 3h1v1h-1zM26 4h12v1h-12zM30 8h1v1h-1zM39 5h11v1h-11zM13 6h12v1h-12zM19 7h1v6h-1zM30 7h6v1h-6zM4 8h1v5h-1zM7 8h1v5h-1zM16 8h1v2h-1zM21 8h1v1h-1zM35 8h1v4h-1zM40 8h4v1h-4zM1 9h1v1h-1zM10 9h1v2h-1zM22 9h1v1h-1zM29 9h1v2h-1zM42 9h1v3h-1zM15 10h1v1h-1zM23 10h1v1h-1zM46 10h1v2h-1zM14 11h1v1h-1zM24 11h1v2h-1zM28 11h1v1h-1zM49 11h1v2h-1zM13 12h1v1h-1zM27 12h1v1h-1zM34 12h1v1h-1zM42 12h3v1h-3zM0 13h12v1h-12zM17 13h3v1h-3zM26 13h1v1h-1zM33 13h1v1h-1zM39 13h3v1h-3zM48 13h2v1h-2z"/></svg>
<div style="left:24px;top:140px;width:50px;height:19px;border:1px solid #868686;border-radius:3px"></div>
<svg style="left:37px;top:142px" width="26" height="21"><path fill="#808080" d="M1 3h1v1h-1zM3 2h1v2h-1zM5 3h1v1h-1zM0 2h1v1h-1zM6 2h1v1h-1zM8 2h1v3h-1zM0 4h7v1h-7zM1 6h1v1h-1zM19 8h1v1h-1zM2 9h1v1h-1zM4 9h1v2h-1zM8 7h1v3h-1zM10 6h1v4h-1zM5 6h1v1h-1zM7 6h1v1h-1zM18 2h1v1h-1zM0 7h1v1h-1zM3 6h1v2h-1zM6 7h1v1h-1zM8 12h1v1h-1zM18 13h1v1h-1zM1 10h1v1h-1zM5 13h1v1h-1zM14 3h11v1h-11zM0 8h7v1h-7zM14 4h1v1h-1zM24 4h1v1h-1zM2 5h3v1h-3zM7 5h5v1h-5zM13 5h1v1h-1zM23 5h1v1h-1zM7 13h1v1h-1zM10 12h1v1h-1zM16 6h6v1h-6zM20 7h1v1h-1zM19 10h1v3h-1zM2 12h1v1h-1zM4 12h1v1h-1zM13 9h12v1h-12zM9 10h1v2h-1zM2 11h2v1h-2zM17 12h1v1h-1zM0 13h2v1h-2zM11 13h1v1h-1z"/></svg>
<div style="left:80px;top:140px;width:51px;height:19px;border:1px solid #868686;border-radius:3px"></div>
<svg style="left:93px;top:142px" width="26" height="21"><path fill="#808080" d="M18 2h1v1h-1zM18 4h1v1h-1zM2 4h1v2h-1zM6 2h1v1h-1zM7 3h1v2h-1zM6 8h1v2h-1zM8 8h1v2h-1zM16 9h1v1h-1zM5 4h1v4h-1zM9 6h1v2h-1zM18 6h1v1h-1zM22 9h1v1h-1zM3 2h1v2h-1zM6 11h1v1h-1zM18 12h1v1h-1zM7 10h1v1h-1zM10 3h1v3h-1zM14 3h10v1h-10zM2 7h1v7h-1zM5 12h1v1h-1zM15 5h8v1h-8zM1 6h2v1h-2zM9 12h1v1h-1zM0 7h1v1h-1zM13 7h12v1h-12zM8 11h1v1h-1zM17 8h1v1h-1zM19 8h1v2h-1zM16 11h1v2h-1zM22 13h1v1h-1zM15 10h2v1h-2zM20 10h1v1h-1zM13 11h2v1h-2zM20 11h2v1h-2zM22 12h2v1h-2zM4 13h1v1h-1zM10 13h2v1h-2zM16 13h2v1h-2z"/></svg>
<div style="left:136px;top:140px;width:52px;height:19px;border:1px solid #000;border-radius:3px;background-color:#fff;background-image:conic-gradient(#d4d0c8 25%,#fff 0 50%,#d4d0c8 0 75%,#fff 0);background-size:2px 2px;box-shadow:inset 1px 1px 0 #808080"></div>
<svg style="left:150px;top:143px" width="26" height="21"><path fill="#000" d="M20 2h1v2h-1zM14 2h1v1h-1zM15 3h1v1h-1zM17 5h1v2h-1zM14 6h1v1h-1zM19 9h1v1h-1zM22 9h1v1h-1zM17 8h2v1h-2zM2 2h8v1h-8zM14 11h1v2h-1zM20 5h1v2h-1zM15 7h1v3h-1zM17 4h8v1h-8zM13 5h1v1h-1zM17 9h1v2h-1zM24 5h1v1h-1zM0 6h12v1h-12zM6 7h1v6h-1zM17 7h7v1h-7zM3 8h1v2h-1zM8 8h1v1h-1zM17 13h2v1h-2zM23 8h1v1h-1zM9 9h1v1h-1zM19 12h1v1h-1zM22 12h1v1h-1zM2 10h1v1h-1zM10 10h1v1h-1zM13 10h2v1h-2zM20 10h2v2h-2zM1 11h1v1h-1zM11 11h1v2h-1zM16 11h1v2h-1zM0 12h1v1h-1zM4 13h3v1h-3zM14 13h2v1h-2zM23 13h2v1h-2z"/></svg>
<div style="left:15px;top:184px;width:189px;height:1px;background:#808080;"></div>
<div style="left:15px;top:184px;width:1px;height:37px;background:#808080;"></div>
<div style="left:16px;top:185px;width:187px;height:1px;background:#ffffff;"></div>
<div style="left:16px;top:185px;width:1px;height:35px;background:#ffffff;"></div>
<div style="left:15px;top:220px;width:189px;height:1px;background:#808080;"></div>
<div style="left:15px;top:221px;width:190px;height:1px;background:#ffffff;"></div>
<div style="left:203px;top:184px;width:1px;height:37px;background:#808080;"></div>
<div style="left:204px;top:184px;width:1px;height:38px;background:#ffffff;"></div>
<div style="left:22px;top:178px;width:56px;height:12px;background:#d4d0c8;"></div>
<svg style="left:24px;top:176px" width="52" height="21"><path fill="#000" d="M16 3h1v1h-1zM19 2h1v1h-1zM42 2h1v2h-1zM28 2h1v3h-1zM5 5h1v1h-1zM16 5h1v1h-1zM19 5h1v1h-1zM31 4h1v1h-1zM37 4h1v2h-1zM42 5h1v1h-1zM16 6h8v1h-8zM40 4h6v1h-6zM16 7h1v1h-1zM19 7h1v1h-1zM40 3h1v1h-1zM42 7h1v1h-1zM3 6h1v1h-1zM5 7h1v1h-1zM7 6h1v1h-1zM28 6h1v2h-1zM34 2h1v1h-1zM2 5h1v1h-1zM8 5h1v1h-1zM17 2h1v1h-1zM19 9h1v1h-1zM16 9h1v1h-1zM7 2h3v1h-3zM17 11h1v1h-1zM19 11h1v3h-1zM28 10h1v3h-1zM34 10h1v3h-1zM42 9h1v5h-1zM50 2h1v11h-1zM1 3h6v1h-6zM16 12h1v1h-1zM20 3h1v1h-1zM31 3h7v1h-7zM40 9h1v4h-1zM4 4h1v1h-1zM9 4h1v1h-1zM15 4h9v1h-9zM31 7h1v1h-1zM37 7h1v1h-1zM40 8h6v1h-6zM47 4h1v7h-1zM2 11h1v1h-1zM5 10h1v4h-1zM8 11h1v1h-1zM14 5h1v1h-1zM26 5h6v1h-6zM33 5h1v1h-1zM35 5h1v1h-1zM39 5h1v1h-1zM3 10h1v1h-1zM7 10h1v1h-1zM16 8h8v1h-8zM32 6h1v1h-1zM36 6h1v1h-1zM39 6h7v1h-7zM0 8h11v1h-11zM28 8h2v1h-2zM4 9h3v1h-3zM26 9h3v1h-3zM31 9h6v1h-6zM45 9h1v3h-1zM13 10h12v1h-12zM21 11h1v1h-1zM1 12h1v1h-1zM9 12h2v1h-2zM22 12h1v1h-1zM26 12h1v1h-1zM44 12h2v1h-2zM0 13h1v1h-1zM10 13h1v1h-1zM14 13h2v1h-2zM23 13h2v1h-2zM27 13h1v1h-1zM30 13h8v1h-8zM48 13h3v1h-3z"/></svg>
<div style="left:27px;top:196px;width:69px;height:21px;background:#d4d0c8;"></div>
<div style="left:27px;top:196px;width:68px;height:1px;background:#ffffff;"></div>
<div style="left:27px;top:196px;width:1px;height:20px;background:#ffffff;"></div>
<div style="left:27px;top:216px;width:69px;height:1px;background:#404040;"></div>
<div style="left:95px;top:196px;width:1px;height:21px;background:#404040;"></div>
<div style="left:28px;top:215px;width:67px;height:1px;background:#808080;"></div>
<div style="left:94px;top:197px;width:1px;height:19px;background:#808080;"></div>
<svg style="left:49px;top:197px" width="26" height="21"><path fill="#000" d="M15 2h1v3h-1zM4 3h1v4h-1zM8 3h1v4h-1zM19 5h1v1h-1zM23 5h1v1h-1zM15 6h1v1h-1zM17 7h1v2h-1zM14 7h1v2h-1zM19 8h5v1h-5zM19 9h1v3h-1zM23 9h1v3h-1zM1 2h10v1h-10zM15 11h1v1h-1zM21 2h1v2h-1zM4 8h1v2h-1zM8 8h1v6h-1zM20 4h1v1h-1zM13 5h5v1h-5zM19 13h1v1h-1zM23 13h1v1h-1zM17 6h8v1h-8zM0 7h12v1h-12zM14 12h1v1h-1zM17 11h1v2h-1zM24 7h1v1h-1zM19 12h5v1h-5zM15 9h2v1h-2zM3 10h1v2h-1zM16 10h1v1h-1zM2 12h1v1h-1zM1 13h1v1h-1zM13 13h1v1h-1z"/></svg>
<div style="left:120px;top:196px;width:68px;height:21px;background-color:#fff;background-image:conic-gradient(#d4d0c8 25%,#fff 0 50%,#d4d0c8 0 75%,#fff 0);background-size:2px 2px"></div>
<div style="left:120px;top:196px;width:67px;height:1px;background:#808080;"></div>
<div style="left:120px;top:196px;width:1px;height:20px;background:#808080;"></div>
<div style="left:121px;top:197px;width:65px;height:1px;background:#404040;"></div>
<div style="left:121px;top:197px;width:1px;height:18px;background:#404040;"></div>
<div style="left:120px;top:216px;width:68px;height:1px;background:#ffffff;"></div>
<div style="left:187px;top:196px;width:1px;height:21px;background:#ffffff;"></div>
<div style="left:121px;top:215px;width:66px;height:1px;background:#d4d0c8;"></div>
<div style="left:186px;top:197px;width:1px;height:19px;background:#d4d0c8;"></div>
<div style="left:123px;top:199px;width:61px;height:14px;border:1px dotted #000;border-radius:2px;box-sizing:border-box;width:63px;height:16px"></div>
<svg style="left:141px;top:197px" width="26" height="21"><path fill="#000" d="M2 4h1v2h-1zM4 4h8v1h-8zM19 2h1v5h-1zM5 6h6v1h-6zM8 3h1v1h-1zM3 2h1v2h-1zM7 2h1v1h-1zM19 8h1v5h-1zM8 11h1v2h-1zM2 7h1v7h-1zM4 8h8v1h-8zM1 6h2v1h-2zM5 10h6v1h-6zM15 6h1v7h-1zM0 7h1v1h-1zM5 7h1v1h-1zM10 7h1v1h-1zM19 7h5v1h-5zM4 9h1v1h-1zM11 9h1v1h-1zM6 13h3v1h-3zM13 13h12v1h-12z"/></svg>
<div style="left:15px;top:239px;width:189px;height:1px;background:#808080;"></div>
<div style="left:15px;top:239px;width:1px;height:108px;background:#808080;"></div>
<div style="left:16px;top:240px;width:187px;height:1px;background:#ffffff;"></div>
<div style="left:16px;top:240px;width:1px;height:106px;background:#ffffff;"></div>
<div style="left:15px;top:346px;width:189px;height:1px;background:#808080;"></div>
<div style="left:15px;top:347px;width:190px;height:1px;background:#ffffff;"></div>
<div style="left:203px;top:239px;width:1px;height:108px;background:#808080;"></div>
<div style="left:204px;top:239px;width:1px;height:109px;background:#ffffff;"></div>
<div style="left:22px;top:233px;width:56px;height:12px;background:#d4d0c8;"></div>
<svg style="left:24px;top:231px" width="52" height="21"><path fill="#000" d="M40 2h10v1h-10zM16 3h1v1h-1zM19 2h1v1h-1zM5 5h1v1h-1zM16 5h1v1h-1zM19 5h1v1h-1zM28 3h1v2h-1zM43 3h1v1h-1zM16 6h8v1h-8zM32 3h1v2h-1zM16 7h1v1h-1zM19 7h1v1h-1zM35 3h1v2h-1zM3 6h1v1h-1zM5 7h1v1h-1zM7 6h1v1h-1zM30 6h1v1h-1zM2 5h1v1h-1zM8 5h1v1h-1zM17 2h1v1h-1zM19 9h1v1h-1zM41 9h1v1h-1zM16 9h1v1h-1zM28 7h1v4h-1zM35 9h1v2h-1zM48 9h1v2h-1zM36 5h2v1h-2zM39 6h12v1h-12zM7 2h3v1h-3zM17 11h1v1h-1zM19 11h1v3h-1zM27 2h1v1h-1zM32 2h4v1h-4zM40 4h10v1h-10zM1 3h6v1h-6zM16 12h1v1h-1zM20 3h1v1h-1zM28 12h1v1h-1zM32 8h1v2h-1zM35 12h1v1h-1zM40 3h1v1h-1zM43 7h1v1h-1zM46 3h1v1h-1zM49 3h1v1h-1zM4 4h1v1h-1zM9 4h1v1h-1zM15 4h9v1h-9zM2 11h1v1h-1zM5 10h1v4h-1zM8 11h1v1h-1zM14 5h1v1h-1zM31 5h1v1h-1zM36 13h2v1h-2zM44 5h1v1h-1zM3 10h1v1h-1zM7 10h1v1h-1zM16 8h8v1h-8zM26 6h3v1h-3zM30 10h1v1h-1zM39 13h12v1h-12zM31 7h6v1h-6zM0 8h11v1h-11zM36 8h1v1h-1zM41 8h8v1h-8zM4 9h3v1h-3zM41 11h1v2h-1zM48 12h1v1h-1zM13 10h12v1h-12zM33 10h1v1h-1zM41 10h5v1h-5zM21 11h1v1h-1zM28 11h2v1h-2zM34 11h1v1h-1zM45 11h4v1h-4zM1 12h1v1h-1zM9 12h2v1h-2zM22 12h1v1h-1zM32 12h2v1h-2zM0 13h1v1h-1zM10 13h1v1h-1zM14 13h2v1h-2zM23 13h2v1h-2zM30 13h2v1h-2z"/></svg>
<div style="left:26px;top:254px;width:80px;height:21px;background:#d4d0c8;"></div>
<div style="left:26px;top:254px;width:79px;height:1px;background:#ffffff;"></div>
<div style="left:26px;top:254px;width:1px;height:20px;background:#ffffff;"></div>
<div style="left:26px;top:274px;width:80px;height:1px;background:#404040;"></div>
<div style="left:105px;top:254px;width:1px;height:21px;background:#404040;"></div>
<div style="left:27px;top:273px;width:78px;height:1px;background:#808080;"></div>
<div style="left:104px;top:255px;width:1px;height:19px;background:#808080;"></div>
<svg style="left:52px;top:255px" width="25" height="21"><path fill="#000" d="M5 2h7v1h-7zM18 3h1v1h-1zM5 3h1v2h-1zM8 4h1v1h-1zM11 3h1v2h-1zM2 3h1v2h-1zM5 5h7v1h-7zM5 6h1v1h-1zM11 6h1v1h-1zM18 5h1v3h-1zM5 8h1v2h-1zM7 9h3v1h-3zM2 7h1v4h-1zM19 11h1v1h-1zM1 2h1v1h-1zM5 7h7v1h-7zM14 2h9v1h-9zM2 12h1v1h-1zM5 11h1v1h-1zM11 8h1v5h-1zM18 9h1v1h-1zM8 6h1v1h-1zM13 4h11v1h-11zM13 5h1v2h-1zM16 5h1v1h-1zM20 5h1v1h-1zM23 5h1v2h-1zM0 6h3v1h-3zM15 6h1v1h-1zM21 6h1v1h-1zM15 8h3v1h-3zM19 8h3v1h-3zM7 11h3v1h-3zM13 9h2v1h-2zM22 9h2v1h-2zM4 10h2v1h-2zM7 10h1v1h-1zM9 10h1v1h-1zM15 10h6v1h-6zM2 11h2v1h-2zM19 13h1v1h-1zM4 12h1v1h-1zM17 12h2v1h-2zM3 13h1v1h-1zM9 13h3v1h-3z"/></svg>
<div style="left:112px;top:254px;width:79px;height:21px;background:#d4d0c8;"></div>
<div style="left:112px;top:254px;width:78px;height:1px;background:#ffffff;"></div>
<div style="left:112px;top:254px;width:1px;height:20px;background:#ffffff;"></div>
<div style="left:112px;top:274px;width:79px;height:1px;background:#404040;"></div>
<div style="left:190px;top:254px;width:1px;height:21px;background:#404040;"></div>
<div style="left:113px;top:273px;width:77px;height:1px;background:#808080;"></div>
<div style="left:189px;top:255px;width:1px;height:19px;background:#808080;"></div>
<svg style="left:125px;top:255px" width="52" height="21"><path fill="#000" d="M2 2h8v1h-8zM40 2h10v1h-10zM2 3h1v1h-1zM9 3h1v1h-1zM2 4h8v1h-8zM28 3h1v2h-1zM43 3h1v1h-1zM32 3h1v2h-1zM35 3h1v2h-1zM2 5h1v2h-1zM30 6h1v1h-1zM9 5h1v2h-1zM41 9h1v1h-1zM28 7h1v4h-1zM35 9h1v2h-1zM48 9h1v2h-1zM36 5h2v1h-2zM39 6h12v1h-12zM2 7h8v1h-8zM15 2h8v1h-8zM27 2h1v1h-1zM32 2h4v1h-4zM40 4h10v1h-10zM2 10h1v2h-1zM9 11h1v1h-1zM28 12h1v1h-1zM32 8h1v2h-1zM35 12h1v1h-1zM40 3h1v1h-1zM43 7h1v1h-1zM46 3h1v1h-1zM49 3h1v1h-1zM31 5h1v1h-1zM36 13h2v1h-2zM44 5h1v1h-1zM13 6h12v1h-12zM26 6h3v1h-3zM30 10h1v1h-1zM39 13h12v1h-12zM19 7h1v6h-1zM31 7h6v1h-6zM4 8h1v5h-1zM7 8h1v5h-1zM16 8h1v2h-1zM21 8h1v1h-1zM36 8h1v1h-1zM41 8h8v1h-8zM1 9h1v1h-1zM10 9h1v2h-1zM22 9h1v1h-1zM41 11h1v2h-1zM48 12h1v1h-1zM15 10h1v1h-1zM23 10h1v1h-1zM33 10h1v1h-1zM41 10h5v1h-5zM14 11h1v1h-1zM24 11h1v2h-1zM28 11h2v1h-2zM34 11h1v1h-1zM45 11h4v1h-4zM13 12h1v1h-1zM32 12h2v1h-2zM0 13h12v1h-12zM17 13h3v1h-3zM30 13h2v1h-2z"/></svg>
<svg style="left:19px;top:312px" width="64" height="21"><path fill="#000" d="M15 2h1v2h-1zM29 2h1v2h-1zM33 2h5v1h-5zM5 5h1v1h-1zM29 5h1v1h-1zM35 3h1v1h-1zM44 4h1v1h-1zM46 5h1v1h-1zM48 5h1v1h-1zM21 5h1v2h-1zM27 3h1v3h-1zM49 4h1v1h-1zM15 5h1v2h-1zM45 2h1v1h-1zM3 6h1v1h-1zM5 7h1v1h-1zM7 6h1v1h-1zM39 3h12v1h-12zM2 5h1v1h-1zM8 5h1v1h-1zM21 8h1v2h-1zM29 7h1v3h-1zM45 9h1v1h-1zM34 4h1v1h-1zM61 3h1v2h-1zM37 6h1v5h-1zM62 2h1v1h-1zM7 2h3v1h-3zM15 9h1v5h-1zM19 2h1v1h-1zM23 2h1v1h-1zM29 11h1v1h-1zM33 5h5v1h-5zM45 11h1v3h-1zM62 14h1v1h-1zM1 3h6v1h-6zM20 3h1v1h-1zM22 3h1v1h-1zM27 8h1v2h-1zM35 7h1v5h-1zM39 10h12v1h-12zM61 12h1v2h-1zM4 4h1v1h-1zM9 4h1v1h-1zM13 4h4v1h-4zM18 4h7v1h-7zM29 4h3v1h-3zM34 12h1v1h-1zM40 4h1v1h-1zM44 7h1v1h-1zM49 8h1v1h-1zM2 11h1v1h-1zM5 10h1v4h-1zM8 11h1v1h-1zM21 11h1v3h-1zM41 5h1v1h-1zM43 5h1v1h-1zM46 7h1v1h-1zM48 7h1v1h-1zM60 5h1v7h-1zM3 10h1v1h-1zM7 10h1v1h-1zM26 6h6v1h-6zM33 6h1v6h-1zM37 13h1v1h-1zM44 6h2v1h-2zM14 7h3v1h-3zM19 7h5v1h-5zM42 7h1v1h-1zM0 8h11v1h-11zM14 8h2v1h-2zM17 8h1v1h-1zM31 8h1v2h-1zM40 8h2v1h-2zM43 8h5v1h-5zM4 9h3v1h-3zM13 9h1v1h-1zM17 10h8v1h-8zM26 10h1v1h-1zM29 10h2v1h-2zM1 12h1v1h-1zM9 12h2v1h-2zM28 12h1v1h-1zM36 12h1v1h-1zM0 13h1v1h-1zM10 13h1v1h-1zM26 13h2v1h-2zM32 13h2v1h-2z"/></svg>
<svg style="left:83px;top:312px" width="8" height="21"><path fill="#000" d="M1 4h1v3h-1zM5 4h1v3h-1zM0 3h3v1h-3zM4 3h3v1h-3zM0 11h3v1h-3zM4 11h3v1h-3zM1 8h1v3h-1zM5 8h1v3h-1zM1 7h5v1h-5z"/></svg>
<svg style="left:91px;top:312px" width="6" height="21"><path fill="#000" d="M0 7h1v1h-1zM0 6h5v1h-5zM0 11h5v1h-5zM0 10h1v1h-1zM3 7h1v1h-1zM2 8h1v1h-1zM1 9h1v1h-1zM4 10h1v1h-1z"/></svg>
<svg style="left:95px;top:312px" width="7" height="21"><path fill="#000" d="M4 3h1v2h-1zM3 2h1v1h-1zM3 14h1v1h-1zM4 12h1v2h-1zM5 5h1v7h-1z"/></svg>
<div style="left:113px;top:311px;width:80px;height:1px;background:#808080;"></div>
<div style="left:113px;top:311px;width:1px;height:20px;background:#808080;"></div>
<div style="left:113px;top:331px;width:81px;height:1px;background:#ffffff;"></div>
<div style="left:193px;top:311px;width:1px;height:21px;background:#ffffff;"></div>
<div style="left:114px;top:312px;width:79px;height:19px;background:#fff;"></div>
<div style="left:114px;top:312px;width:78px;height:1px;background:#404040;"></div>
<div style="left:114px;top:312px;width:1px;height:18px;background:#404040;"></div>
<div style="left:114px;top:330px;width:79px;height:1px;background:#d4d0c8;"></div>
<div style="left:192px;top:312px;width:1px;height:19px;background:#d4d0c8;"></div>
<svg style="left:118px;top:315px" width="21" height="21"><path fill="#000" d="M2 2h1v1h-1zM14 3h1v3h-1zM17 4h1v1h-1zM18 3h1v1h-1zM8 2h3v1h-3zM13 2h3v1h-3zM2 4h1v6h-1zM8 10h3v1h-3zM13 10h3v1h-3zM17 2h3v1h-3zM1 3h2v1h-2zM7 3h1v7h-1zM11 3h1v7h-1zM14 7h1v3h-1zM18 8h1v2h-1zM17 7h1v1h-1zM16 5h1v1h-1zM14 6h3v1h-3zM1 10h4v1h-4zM18 10h2v1h-2z"/></svg>
<div style="left:177px;top:313px;width:15px;height:17px;background:#d4d0c8;"></div>
<div style="left:177px;top:313px;width:14px;height:1px;background:#ffffff;"></div>
<div style="left:177px;top:313px;width:1px;height:16px;background:#ffffff;"></div>
<div style="left:177px;top:329px;width:15px;height:1px;background:#404040;"></div>
<div style="left:191px;top:313px;width:1px;height:17px;background:#404040;"></div>
<div style="left:178px;top:328px;width:13px;height:1px;background:#808080;"></div>
<div style="left:190px;top:314px;width:1px;height:15px;background:#808080;"></div>
<svg style="left:180px;top:319px" width="7" height="4" shape-rendering="crispEdges"><path fill="#000" d="M0 0h7v1h-7zM1 1h5v1h-5zM2 2h3v1h-3zM3 3h1v1h-1z"/></svg>
<div style="left:15px;top:367px;width:189px;height:1px;background:#808080;"></div>
<div style="left:15px;top:367px;width:1px;height:96px;background:#808080;"></div>
<div style="left:16px;top:368px;width:187px;height:1px;background:#ffffff;"></div>
<div style="left:16px;top:368px;width:1px;height:94px;background:#ffffff;"></div>
<div style="left:15px;top:462px;width:189px;height:1px;background:#808080;"></div>
<div style="left:15px;top:463px;width:190px;height:1px;background:#ffffff;"></div>
<div style="left:203px;top:367px;width:1px;height:96px;background:#808080;"></div>
<div style="left:204px;top:367px;width:1px;height:97px;background:#ffffff;"></div>
<div style="left:22px;top:361px;width:56px;height:12px;background:#d4d0c8;"></div>
<svg style="left:24px;top:358px" width="52" height="21"><path fill="#000" d="M42 2h1v2h-1zM4 3h1v1h-1zM20 2h1v3h-1zM28 2h1v3h-1zM1 3h1v3h-1zM15 2h1v2h-1zM31 4h1v1h-1zM37 4h1v2h-1zM42 5h1v1h-1zM4 6h1v1h-1zM14 4h1v2h-1zM16 5h1v1h-1zM18 5h6v1h-6zM40 4h6v1h-6zM5 7h1v1h-1zM13 6h3v1h-3zM20 6h1v2h-1zM23 4h1v1h-1zM40 3h1v1h-1zM42 7h1v1h-1zM1 7h1v2h-1zM4 8h1v1h-1zM6 6h1v1h-1zM10 3h1v6h-1zM22 3h1v1h-1zM28 6h1v2h-1zM34 2h1v1h-1zM5 9h1v1h-1zM24 7h1v1h-1zM6 10h1v1h-1zM20 9h1v2h-1zM22 10h1v1h-1zM1 2h10v1h-10zM1 13h10v1h-10zM15 7h1v1h-1zM20 12h1v1h-1zM28 10h1v3h-1zM34 10h1v3h-1zM42 9h1v5h-1zM50 2h1v11h-1zM1 10h1v3h-1zM4 10h1v1h-1zM10 10h1v3h-1zM22 12h1v1h-1zM31 3h7v1h-7zM40 9h1v4h-1zM4 4h4v1h-4zM14 8h1v1h-1zM23 9h1v1h-1zM31 7h1v1h-1zM37 7h1v1h-1zM40 8h6v1h-6zM47 4h1v7h-1zM3 5h1v1h-1zM7 5h1v1h-1zM16 8h1v1h-1zM18 8h6v1h-6zM26 5h6v1h-6zM33 5h1v1h-1zM35 5h1v1h-1zM39 5h1v1h-1zM1 6h2v1h-2zM6 12h1v1h-1zM13 9h3v1h-3zM32 6h1v1h-1zM36 6h1v1h-1zM39 6h7v1h-7zM5 11h1v1h-1zM24 11h1v2h-1zM6 8h2v1h-2zM28 8h2v1h-2zM1 9h3v1h-3zM8 9h3v1h-3zM26 9h3v1h-3zM31 9h6v1h-6zM45 9h1v3h-1zM15 11h2v1h-2zM21 11h1v1h-1zM13 12h2v1h-2zM26 12h1v1h-1zM44 12h2v1h-2zM18 13h2v1h-2zM23 13h2v1h-2zM27 13h1v1h-1zM30 13h8v1h-8zM48 13h3v1h-3z"/></svg>
<svg style="left:26px;top:389px" width="33" height="21"><path fill="#000" d="M27 2h1v1h-1zM22 4h1v2h-1zM27 5h1v1h-1zM29 5h1v1h-1zM25 4h2v1h-2zM12 4h1v4h-1zM27 7h1v1h-1zM1 5h1v2h-1zM4 5h1v2h-1zM22 7h1v1h-1zM25 8h2v1h-2zM28 6h1v1h-1zM30 4h1v1h-1zM29 7h1v1h-1zM0 4h2v1h-2zM4 4h2v1h-2zM23 2h2v1h-2zM27 9h1v1h-1zM8 3h10v1h-10zM20 3h3v1h-3zM27 3h4v1h-4zM0 12h2v1h-2zM4 12h2v1h-2zM12 9h1v5h-1zM22 10h1v4h-1zM25 10h2v1h-2zM30 10h1v1h-1zM1 10h1v2h-1zM4 10h1v2h-1zM9 5h1v1h-1zM16 5h1v1h-1zM29 11h1v1h-1zM10 6h1v1h-1zM15 6h1v1h-1zM20 6h5v1h-5zM28 10h1v1h-1zM2 7h2v3h-2zM7 8h12v1h-12zM21 8h3v1h-3zM28 8h4v1h-4zM21 9h2v1h-2zM24 9h1v1h-1zM31 9h1v1h-1zM20 10h1v2h-1zM27 12h2v1h-2zM24 13h3v1h-3z"/></svg>
<div style="left:65px;top:387px;width:24px;height:20px;background:#d4d0c8;"></div>
<div style="left:65px;top:387px;width:23px;height:1px;background:#ffffff;"></div>
<div style="left:65px;top:387px;width:1px;height:19px;background:#ffffff;"></div>
<div style="left:65px;top:406px;width:24px;height:1px;background:#404040;"></div>
<div style="left:88px;top:387px;width:1px;height:20px;background:#404040;"></div>
<div style="left:66px;top:405px;width:22px;height:1px;background:#808080;"></div>
<div style="left:87px;top:388px;width:1px;height:18px;background:#808080;"></div>
<svg style="left:72px;top:391px" width="5" height="9" shape-rendering="crispEdges"><path fill="#000" d="M4 0h1v9h-1zM3 1h1v7h-1zM2 2h1v5h-1zM1 3h1v3h-1zM0 4h1v1h-1z"/></svg>
<div style="left:90px;top:387px;width:25px;height:20px;background:#d4d0c8;"></div>
<div style="left:90px;top:387px;width:24px;height:1px;background:#ffffff;"></div>
<div style="left:90px;top:387px;width:1px;height:19px;background:#ffffff;"></div>
<div style="left:90px;top:406px;width:25px;height:1px;background:#404040;"></div>
<div style="left:114px;top:387px;width:1px;height:20px;background:#404040;"></div>
<div style="left:91px;top:405px;width:23px;height:1px;background:#808080;"></div>
<div style="left:113px;top:388px;width:1px;height:18px;background:#808080;"></div>
<svg style="left:101px;top:391px" width="5" height="9" shape-rendering="crispEdges"><path fill="#000" d="M0 0h1v9h-1zM1 1h1v7h-1zM2 2h1v5h-1zM3 3h1v3h-1zM4 4h1v1h-1z"/></svg>
<svg style="left:126px;top:389px" width="33" height="21"><path fill="#000" d="M27 2h1v1h-1zM22 4h1v2h-1zM27 5h1v1h-1zM29 5h1v1h-1zM25 4h2v1h-2zM12 4h1v4h-1zM27 7h1v1h-1zM22 7h1v1h-1zM25 8h2v1h-2zM28 6h1v1h-1zM30 4h1v1h-1zM29 7h1v1h-1zM23 2h2v1h-2zM27 9h1v1h-1zM8 3h10v1h-10zM20 3h3v1h-3zM27 3h4v1h-4zM0 4h2v1h-2zM4 4h2v1h-2zM12 9h1v5h-1zM22 10h1v4h-1zM25 10h2v1h-2zM30 10h1v1h-1zM1 5h1v2h-1zM4 5h1v2h-1zM9 5h1v1h-1zM16 5h1v1h-1zM29 11h1v1h-1zM10 6h1v1h-1zM15 6h1v1h-1zM20 6h5v1h-5zM28 10h1v1h-1zM2 7h2v1h-2zM2 8h1v4h-1zM7 8h12v1h-12zM21 8h3v1h-3zM28 8h4v1h-4zM21 9h2v1h-2zM24 9h1v1h-1zM31 9h1v1h-1zM20 10h1v2h-1zM1 12h3v1h-3zM27 12h2v1h-2zM24 13h3v1h-3z"/></svg>
<div style="left:165px;top:379px;width:24px;height:17px;background:#d4d0c8;"></div>
<div style="left:165px;top:379px;width:23px;height:1px;background:#ffffff;"></div>
<div style="left:165px;top:379px;width:1px;height:16px;background:#ffffff;"></div>
<div style="left:165px;top:395px;width:24px;height:1px;background:#404040;"></div>
<div style="left:188px;top:379px;width:1px;height:17px;background:#404040;"></div>
<div style="left:166px;top:394px;width:22px;height:1px;background:#808080;"></div>
<div style="left:187px;top:380px;width:1px;height:15px;background:#808080;"></div>
<svg style="left:172px;top:384px" width="7" height="4" shape-rendering="crispEdges"><path fill="#000" d="M3 0h1v1h-1zM2 1h3v1h-3zM1 2h5v1h-5zM0 3h7v1h-7z"/></svg>
<div style="left:165px;top:396px;width:24px;height:18px;background:#d4d0c8;"></div>
<div style="left:165px;top:396px;width:23px;height:1px;background:#ffffff;"></div>
<div style="left:165px;top:396px;width:1px;height:17px;background:#ffffff;"></div>
<div style="left:165px;top:413px;width:24px;height:1px;background:#404040;"></div>
<div style="left:188px;top:396px;width:1px;height:18px;background:#404040;"></div>
<div style="left:166px;top:412px;width:22px;height:1px;background:#808080;"></div>
<div style="left:187px;top:397px;width:1px;height:16px;background:#808080;"></div>
<svg style="left:172px;top:404px" width="7" height="4" shape-rendering="crispEdges"><path fill="#000" d="M0 0h7v1h-7zM1 1h5v1h-5zM2 2h3v1h-3zM3 3h1v1h-1z"/></svg>
<svg style="left:26px;top:429px" width="33" height="21"><path fill="#000" d="M22 2h1v1h-1zM12 4h1v1h-1zM9 2h1v2h-1zM27 5h1v1h-1zM8 4h1v2h-1zM10 5h1v1h-1zM12 6h1v1h-1zM18 4h1v1h-1zM22 5h1v2h-1zM28 2h1v2h-1zM1 5h1v2h-1zM4 5h1v2h-1zM14 7h5v1h-5zM14 8h1v2h-1zM18 8h1v2h-1zM0 4h2v1h-2zM4 4h2v1h-2zM28 8h1v2h-1zM30 5h1v5h-1zM14 10h5v1h-5zM26 6h2v1h-2zM9 7h1v1h-1zM15 2h1v1h-1zM22 8h1v3h-1zM28 12h1v1h-1zM12 3h7v1h-7zM23 3h1v1h-1zM0 12h2v1h-2zM4 12h2v1h-2zM8 8h1v1h-1zM12 8h1v6h-1zM18 11h1v2h-1zM20 4h6v1h-6zM27 4h5v1h-5zM1 10h1v2h-1zM4 10h1v2h-1zM10 8h1v1h-1zM13 5h6v1h-6zM27 7h1v1h-1zM30 12h1v1h-1zM7 6h3v1h-3zM16 6h1v1h-1zM26 13h2v1h-2zM2 7h2v3h-2zM11 7h2v1h-2zM14 13h5v1h-5zM22 7h4v1h-4zM14 11h1v2h-1zM25 8h1v5h-1zM7 9h4v1h-4zM29 10h1v2h-1zM9 11h2v1h-2zM21 11h1v2h-1zM7 12h2v1h-2zM20 13h1v1h-1zM23 13h2v1h-2zM31 13h1v1h-1z"/></svg>
<div style="left:65px;top:429px;width:24px;height:20px;background:#d4d0c8;"></div>
<div style="left:65px;top:429px;width:23px;height:1px;background:#ffffff;"></div>
<div style="left:65px;top:429px;width:1px;height:19px;background:#ffffff;"></div>
<div style="left:65px;top:448px;width:24px;height:1px;background:#404040;"></div>
<div style="left:88px;top:429px;width:1px;height:20px;background:#404040;"></div>
<div style="left:66px;top:447px;width:22px;height:1px;background:#808080;"></div>
<div style="left:87px;top:430px;width:1px;height:18px;background:#808080;"></div>
<svg style="left:72px;top:433px" width="5" height="9" shape-rendering="crispEdges"><path fill="#000" d="M4 0h1v9h-1zM3 1h1v7h-1zM2 2h1v5h-1zM1 3h1v3h-1zM0 4h1v1h-1z"/></svg>
<div style="left:90px;top:429px;width:25px;height:20px;background:#d4d0c8;"></div>
<div style="left:90px;top:429px;width:24px;height:1px;background:#ffffff;"></div>
<div style="left:90px;top:429px;width:1px;height:19px;background:#ffffff;"></div>
<div style="left:90px;top:448px;width:25px;height:1px;background:#404040;"></div>
<div style="left:114px;top:429px;width:1px;height:20px;background:#404040;"></div>
<div style="left:91px;top:447px;width:23px;height:1px;background:#808080;"></div>
<div style="left:113px;top:430px;width:1px;height:18px;background:#808080;"></div>
<svg style="left:101px;top:433px" width="5" height="9" shape-rendering="crispEdges"><path fill="#000" d="M0 0h1v9h-1zM1 1h1v7h-1zM2 2h1v5h-1zM3 3h1v3h-1zM4 4h1v1h-1z"/></svg>
<svg style="left:126px;top:429px" width="33" height="21"><path fill="#000" d="M22 2h1v1h-1zM12 4h1v1h-1zM9 2h1v2h-1zM27 5h1v1h-1zM8 4h1v2h-1zM10 5h1v1h-1zM12 6h1v1h-1zM18 4h1v1h-1zM22 5h1v2h-1zM28 2h1v2h-1zM14 7h5v1h-5zM14 8h1v2h-1zM18 8h1v2h-1zM28 8h1v2h-1zM30 5h1v5h-1zM14 10h5v1h-5zM26 6h2v1h-2zM9 7h1v1h-1zM15 2h1v1h-1zM22 8h1v3h-1zM28 12h1v1h-1zM12 3h7v1h-7zM23 3h1v1h-1zM0 4h2v1h-2zM4 4h2v1h-2zM8 8h1v1h-1zM12 8h1v6h-1zM18 11h1v2h-1zM20 4h6v1h-6zM27 4h5v1h-5zM1 5h1v2h-1zM4 5h1v2h-1zM10 8h1v1h-1zM13 5h6v1h-6zM27 7h1v1h-1zM30 12h1v1h-1zM7 6h3v1h-3zM16 6h1v1h-1zM26 13h2v1h-2zM2 7h2v1h-2zM11 7h2v1h-2zM14 13h5v1h-5zM22 7h4v1h-4zM2 8h1v4h-1zM14 11h1v2h-1zM25 8h1v5h-1zM7 9h4v1h-4zM29 10h1v2h-1zM9 11h2v1h-2zM21 11h1v2h-1zM1 12h3v1h-3zM7 12h2v1h-2zM20 13h1v1h-1zM23 13h2v1h-2zM31 13h1v1h-1z"/></svg>
<div style="left:165px;top:423px;width:24px;height:17px;background:#d4d0c8;"></div>
<div style="left:165px;top:423px;width:23px;height:1px;background:#ffffff;"></div>
<div style="left:165px;top:423px;width:1px;height:16px;background:#ffffff;"></div>
<div style="left:165px;top:439px;width:24px;height:1px;background:#404040;"></div>
<div style="left:188px;top:423px;width:1px;height:17px;background:#404040;"></div>
<div style="left:166px;top:438px;width:22px;height:1px;background:#808080;"></div>
<div style="left:187px;top:424px;width:1px;height:15px;background:#808080;"></div>
<svg style="left:172px;top:428px" width="7" height="4" shape-rendering="crispEdges"><path fill="#000" d="M3 0h1v1h-1zM2 1h3v1h-3zM1 2h5v1h-5zM0 3h7v1h-7z"/></svg>
<div style="left:165px;top:440px;width:24px;height:18px;background:#d4d0c8;"></div>
<div style="left:165px;top:440px;width:23px;height:1px;background:#ffffff;"></div>
<div style="left:165px;top:440px;width:1px;height:17px;background:#ffffff;"></div>
<div style="left:165px;top:457px;width:24px;height:1px;background:#404040;"></div>
<div style="left:188px;top:440px;width:1px;height:18px;background:#404040;"></div>
<div style="left:166px;top:456px;width:22px;height:1px;background:#808080;"></div>
<div style="left:187px;top:441px;width:1px;height:16px;background:#808080;"></div>
<svg style="left:172px;top:448px" width="7" height="4" shape-rendering="crispEdges"><path fill="#000" d="M0 0h7v1h-7zM1 1h5v1h-5zM2 2h3v1h-3zM3 3h1v1h-1z"/></svg>
<div style="left:0px;top:720px;width:221px;height:1px;background:#808080;"></div>
<div style="left:0px;top:721px;width:221px;height:1px;background:#ffffff;"></div>
<div style="left:225px;top:77px;width:795px;height:641px;background:#fff;"></div>
<div style="left:221px;top:73px;width:802px;height:1px;background:#808080;"></div>
<div style="left:221px;top:73px;width:1px;height:648px;background:#808080;"></div>
<div style="left:221px;top:721px;width:803px;height:1px;background:#ffffff;"></div>
<div style="left:1023px;top:73px;width:1px;height:649px;background:#ffffff;"></div>
<div style="left:222px;top:74px;width:800px;height:1px;background:#404040;"></div>
<div style="left:222px;top:74px;width:1px;height:646px;background:#404040;"></div>
<div style="left:222px;top:720px;width:801px;height:1px;background:#d4d0c8;"></div>
<div style="left:1022px;top:74px;width:1px;height:647px;background:#d4d0c8;"></div>
<div style="left:223px;top:75px;width:798px;height:1px;background:#808080;"></div>
<div style="left:223px;top:75px;width:1px;height:644px;background:#808080;"></div>
<div style="left:223px;top:719px;width:799px;height:1px;background:#ffffff;"></div>
<div style="left:1021px;top:75px;width:1px;height:645px;background:#ffffff;"></div>
<div style="left:224px;top:76px;width:796px;height:1px;background:#404040;"></div>
<div style="left:224px;top:76px;width:1px;height:642px;background:#404040;"></div>
<div style="left:224px;top:718px;width:797px;height:1px;background:#d4d0c8;"></div>
<div style="left:1020px;top:76px;width:1px;height:643px;background:#d4d0c8;"></div>
<svg style="left:0;top:0" width="1024" height="743"><path d="M243.5 76V701M295.5 76V701M347.5 76V701M399.5 76V701M451.5 76V701M503.5 76V701M555.5 76V701M607.5 76V701M659.5 76V701M710.5 76V701M762.5 76V701M814.5 76V701M866.5 76V701M918.5 76V701M970.5 76V701M244 694.5H1020M244 663.5H1020M244 633.5H1020M244 602.5H1020M244 572.5H1020M244 541.5H1020M244 511.5H1020M244 480.5H1020M244 450.5H1020M244 419.5H1020M244 389.5H1020M244 358.5H1020M244 328.5H1020M244 297.5H1020M244 267.5H1020M244 236.5H1020M244 206.5H1020M244 175.5H1020M244 145.5H1020M244 114.5H1020M244 84.5H1020" stroke="#d4d4d4" stroke-width="1" stroke-dasharray="3 3" fill="none"/><clipPath id="pc"><rect x="241" y="78" width="779" height="624"/></clipPath><polyline clip-path="url(#pc)" points="234.71,451.57 237.31,417.90 239.90,382.18 242.49,347.12 245.09,315.39 247.68,289.40 250.27,271.12 252.87,261.95 255.46,262.57 258.05,272.95 260.65,292.28 263.24,319.12 265.83,351.40 268.43,386.69 271.02,422.30 273.61,455.52 276.21,483.84 278.80,505.08 281.39,517.66 283.99,520.60 286.58,513.68 289.17,497.43 291.77,473.09 294.36,442.50 296.95,407.99 299.55,372.18 302.14,337.80 304.73,307.45 307.33,283.44 309.92,267.59 312.51,261.12 315.11,264.51 317.70,277.51 320.29,299.12 322.89,327.70 325.48,361.09 328.07,396.75 330.67,431.96 333.26,464.05 335.85,490.58 338.45,509.53 341.04,519.47 343.63,519.64 346.23,510.03 348.82,491.36 351.41,465.06 354.01,433.13 356.60,397.98 359.19,362.30 361.79,328.79 364.38,300.00 366.97,278.12 369.57,264.80 372.16,261.07 374.75,267.21 377.34,282.75 379.94,306.50 382.53,336.67 385.12,370.96 387.72,406.76 390.31,441.36 392.90,472.13 395.50,496.72 398.09,513.27 400.68,520.52 403.28,517.92 405.87,505.67 408.46,484.70 411.06,456.59 413.65,423.50 416.24,387.93 418.84,352.59 421.43,320.15 424.02,293.09 426.62,273.47 429.21,262.77 431.80,261.80 434.40,270.65 436.99,288.64 439.58,314.39 442.18,345.96 444.77,380.95 447.36,416.69 449.96,450.47 452.55,479.72 455.14,502.23 457.74,516.27 460.33,520.79 462.92,515.44 465.52,500.62 468.11,477.47 470.70,447.73 473.30,413.68 475.89,377.90 478.48,343.10 481.08,311.94 483.67,286.78 486.26,269.53 488.86,261.50 491.45,263.31 494.04,274.81 496.64,295.14 499.23,322.74 501.82,355.52 504.42,390.99 507.01,426.46 509.60,459.22 512.20,486.79 514.79,507.07 517.38,518.53 519.98,520.28 522.57,512.21 525.16,494.91 527.76,469.72 530.35,438.53 532.94,403.72 535.54,367.94 538.13,333.90 540.72,304.20 543.32,281.08 545.91,266.31 548.50,261.01 551.10,265.57 553.69,279.67 556.28,302.21 558.88,331.49 561.47,365.29 564.06,401.04 566.66,436.01 569.25,467.56 571.84,493.28 574.44,511.22 577.03,520.02 579.62,519.00 582.22,508.25 584.81,488.59 587.40,461.50 590.00,429.04 592.59,393.69 595.18,358.12 597.78,325.05 600.37,296.98 602.96,276.05 605.56,263.84 608.15,261.29 610.74,268.59 613.34,285.19 615.93,309.82 618.52,340.61 621.12,375.22 623.71,411.02 626.30,445.30 628.89,475.44 631.49,499.15 634.08,514.64 636.67,520.73 639.27,516.95 641.86,503.59 644.45,481.67 647.05,452.85 649.64,419.32 652.23,383.64 654.83,348.50 657.42,316.59 660.01,290.32 662.61,271.70 665.20,262.13 667.79,262.35 670.39,272.34 672.98,291.34 675.57,317.91 678.17,350.02 680.76,385.24 683.35,420.89 685.95,454.26 688.54,482.81 691.13,504.38 693.73,517.33 696.32,520.67 698.91,514.15 701.51,498.26 704.10,474.21 706.69,443.84 709.29,409.44 711.88,373.63 714.47,339.13 717.07,308.57 719.66,284.26 722.25,268.06 724.85,261.19 727.44,264.18 730.03,276.80 732.63,298.09 735.22,326.43 737.81,359.68 740.41,395.29 743.00,430.57 745.59,462.84 748.19,489.63 750.78,508.93 753.37,519.26 755.97,519.83 758.56,510.60 761.15,492.28 763.75,466.26 766.34,434.50 768.93,399.44 771.53,363.72 774.12,330.07 776.71,301.05 779.31,278.85 781.90,265.16 784.49,261.03 787.09,266.77 789.68,281.95 792.27,305.40 794.87,335.35 797.46,369.52 800.05,405.32 802.65,440.02 805.24,470.98 807.83,495.87 810.43,512.77 813.02,520.42 815.61,518.22 818.21,506.35 820.80,485.70 823.39,457.85 825.99,424.91 828.58,389.39 831.17,353.98 833.77,321.38 836.36,294.06 838.95,274.10 841.55,263.02 844.14,261.65 846.73,270.11 849.33,287.74 851.92,313.22 854.51,344.60 857.11,379.49 859.70,415.26 862.29,449.17 864.89,478.65 867.48,501.47 870.07,515.88 872.67,520.80 875.26,515.84 877.85,501.39 880.45,478.55 883.04,449.04 885.63,415.11 888.23,379.35 890.82,344.46 893.41,313.10 896.00,287.65 898.60,270.05 901.19,261.64 903.78,263.04 906.38,274.16 908.97,294.16 911.56,321.50 914.16,354.12 916.75,389.53 919.34,425.05 921.94,457.97 924.53,485.80 927.12,506.41 929.72,518.25 932.31,520.41 934.90,512.72 937.50,495.78 940.09,470.87 942.68,439.88 945.28,405.17 947.87,369.38 950.46,335.22 953.06,305.29 955.65,281.87 958.24,266.73 960.84,261.03 963.43,265.20 966.02,278.92 968.62,301.15 971.21,330.20 973.80,363.86 976.40,399.58 978.99,434.64 981.58,466.37 984.18,492.37 986.77,510.66 989.36,519.85 991.96,519.24 994.55,508.87 997.14,489.54 999.74,462.72 1002.33,430.43 1004.92,395.15 1007.52,359.54 1010.11,326.31 1012.70,297.99 1015.30,276.73" stroke="#ff0000" stroke-width="2" fill="none" stroke-linejoin="round" shape-rendering="crispEdges"/><path d="M242 389.5H1020" stroke="#000" stroke-width="1" shape-rendering="crispEdges"/><path d="M240.5 78V703M240 702.5H1020M238 78.5H240M237 694.5H240M237 663.5H240M237 633.5H240M237 602.5H240M237 572.5H240M237 541.5H240M237 511.5H240M237 480.5H240M237 450.5H240M237 419.5H240M237 389.5H240M237 358.5H240M237 328.5H240M237 297.5H240M237 267.5H240M237 236.5H240M237 206.5H240M237 175.5H240M237 145.5H240M237 114.5H240M237 84.5H240M238 700.5H240M238 687.5H240M238 681.5H240M238 675.5H240M238 669.5H240M238 657.5H240M238 651.5H240M238 645.5H240M238 639.5H240M238 626.5H240M238 620.5H240M238 614.5H240M238 608.5H240M238 596.5H240M238 590.5H240M238 584.5H240M238 578.5H240M238 565.5H240M238 559.5H240M238 553.5H240M238 547.5H240M238 535.5H240M238 529.5H240M238 523.5H240M238 517.5H240M238 504.5H240M238 498.5H240M238 492.5H240M238 486.5H240M238 474.5H240M238 468.5H240M238 462.5H240M238 456.5H240M238 443.5H240M238 437.5H240M238 431.5H240M238 425.5H240M238 413.5H240M238 407.5H240M238 401.5H240M238 395.5H240M238 382.5H240M238 376.5H240M238 370.5H240M238 364.5H240M238 352.5H240M238 346.5H240M238 340.5H240M238 334.5H240M238 321.5H240M238 315.5H240M238 309.5H240M238 303.5H240M238 291.5H240M238 285.5H240M238 279.5H240M238 273.5H240M238 260.5H240M238 254.5H240M238 248.5H240M238 242.5H240M238 230.5H240M238 224.5H240M238 218.5H240M238 212.5H240M238 199.5H240M238 193.5H240M238 187.5H240M238 181.5H240M238 169.5H240M238 163.5H240M238 157.5H240M238 151.5H240M238 138.5H240M238 132.5H240M238 126.5H240M238 120.5H240M238 108.5H240M238 102.5H240M238 96.5H240M238 90.5H240M243.5 703V706M253.5 703V705M264.5 703V705M274.5 703V705M285.5 703V705M295.5 703V706M305.5 703V705M316.5 703V705M326.5 703V705M337.5 703V705M347.5 703V706M357.5 703V705M368.5 703V705M378.5 703V705M389.5 703V705M399.5 703V706M409.5 703V705M420.5 703V705M430.5 703V705M440.5 703V705M451.5 703V706M461.5 703V705M472.5 703V705M482.5 703V705M492.5 703V705M503.5 703V706M513.5 703V705M524.5 703V705M534.5 703V705M544.5 703V705M555.5 703V706M565.5 703V705M575.5 703V705M586.5 703V705M596.5 703V705M607.5 703V706M617.5 703V705M627.5 703V705M638.5 703V705M648.5 703V705M659.5 703V706M669.5 703V705M679.5 703V705M690.5 703V705M700.5 703V705M710.5 703V706M721.5 703V705M731.5 703V705M742.5 703V705M752.5 703V705M762.5 703V706M773.5 703V705M783.5 703V705M794.5 703V705M804.5 703V705M814.5 703V706M825.5 703V705M835.5 703V705M845.5 703V705M856.5 703V705M866.5 703V706M877.5 703V705M887.5 703V705M897.5 703V705M908.5 703V705M918.5 703V706M929.5 703V705M939.5 703V705M949.5 703V705M960.5 703V705M970.5 703V706M981.5 703V705M991.5 703V705" stroke="#000" stroke-width="1" fill="none" shape-rendering="crispEdges"/></svg>
<svg style="left:227px;top:648px" width="9" height="32"><path fill="#000" d="M1 2h7v1h-7zM1 6h7v1h-7zM0 3h1v3h-1zM8 3h1v3h-1zM1 8h7v1h-7zM0 9h1v3h-1zM8 9h1v3h-1zM3 15h1v1h-1zM5 15h1v1h-1zM1 14h2v1h-2zM6 14h2v1h-2zM8 15h1v3h-1zM8 19h1v2h-1zM1 12h7v1h-7zM0 15h1v3h-1zM8 22h1v2h-1zM1 18h2v1h-2zM6 18h2v1h-2zM3 17h1v1h-1zM5 17h1v1h-1zM4 16h1v1h-1zM0 21h9v1h-9zM1 22h1v2h-1zM6 26h1v3h-1z"/></svg>
<svg style="left:227px;top:618px" width="9" height="32"><path fill="#000" d="M1 2h7v1h-7zM1 6h7v1h-7zM0 3h1v3h-1zM8 3h1v3h-1zM1 8h7v1h-7zM0 9h1v3h-1zM8 9h1v3h-1zM1 14h1v1h-1zM8 15h1v3h-1zM1 17h1v1h-1zM8 19h1v2h-1zM1 12h7v1h-7zM0 15h1v2h-1zM8 22h1v2h-1zM1 22h1v2h-1zM4 14h4v1h-4zM3 15h1v2h-1zM4 17h1v1h-1zM2 18h6v1h-6zM0 21h9v1h-9zM6 26h1v3h-1z"/></svg>
<svg style="left:227px;top:587px" width="9" height="32"><path fill="#000" d="M1 2h7v1h-7zM1 6h7v1h-7zM0 3h1v3h-1zM8 3h1v3h-1zM1 8h7v1h-7zM8 9h1v3h-1zM6 14h1v1h-1zM8 14h1v1h-1zM8 16h1v1h-1zM0 15h9v1h-9zM8 19h1v2h-1zM6 16h1v2h-1zM1 12h7v1h-7zM0 9h1v3h-1zM8 22h1v2h-1zM6 26h1v3h-1zM0 21h9v1h-9zM1 16h2v1h-2zM3 17h2v1h-2zM5 18h2v1h-2zM1 22h1v2h-1z"/></svg>
<svg style="left:227px;top:557px" width="9" height="32"><path fill="#000" d="M1 2h7v1h-7zM1 6h7v1h-7zM0 3h1v3h-1zM8 3h1v3h-1zM1 8h7v1h-7zM0 9h1v3h-1zM8 9h1v3h-1zM7 14h2v1h-2zM8 15h1v3h-1zM1 18h1v1h-1zM8 19h1v2h-1zM6 17h1v1h-1zM1 12h7v1h-7zM0 15h1v3h-1zM8 22h1v2h-1zM1 14h3v1h-3zM7 18h2v1h-2zM4 15h1v1h-1zM5 16h1v1h-1zM6 26h1v3h-1zM1 22h1v2h-1zM0 21h9v1h-9z"/></svg>
<svg style="left:227px;top:526px" width="9" height="32"><path fill="#000" d="M1 2h7v1h-7zM1 6h7v1h-7zM0 3h1v3h-1zM8 3h1v3h-1zM1 8h7v1h-7zM1 12h7v1h-7zM0 9h1v3h-1zM8 9h1v3h-1zM1 14h7v1h-7zM8 15h1v3h-1zM8 19h1v2h-1zM1 18h7v1h-7zM0 15h1v3h-1zM8 22h1v2h-1zM0 21h9v1h-9zM1 22h1v2h-1zM6 26h1v3h-1z"/></svg>
<svg style="left:227px;top:499px" width="9" height="26"><path fill="#000" d="M1 2h7v1h-7zM1 6h7v1h-7zM0 3h1v3h-1zM8 3h1v3h-1zM1 8h7v1h-7zM0 9h1v3h-1zM8 9h1v3h-1zM3 15h1v1h-1zM5 15h1v1h-1zM1 14h2v1h-2zM6 14h2v1h-2zM1 12h7v1h-7zM0 15h1v3h-1zM8 15h1v3h-1zM1 18h2v1h-2zM6 18h2v1h-2zM3 17h1v1h-1zM5 17h1v1h-1zM4 16h1v1h-1zM6 20h1v3h-1z"/></svg>
<svg style="left:227px;top:468px" width="9" height="26"><path fill="#000" d="M1 2h7v1h-7zM1 6h7v1h-7zM0 3h1v3h-1zM8 3h1v3h-1zM1 8h7v1h-7zM0 9h1v3h-1zM8 9h1v3h-1zM1 14h1v1h-1zM1 12h7v1h-7zM0 15h1v2h-1zM8 15h1v3h-1zM1 17h1v1h-1zM4 14h4v1h-4zM3 15h1v2h-1zM4 17h1v1h-1zM2 18h6v1h-6zM6 20h1v3h-1z"/></svg>
<svg style="left:227px;top:438px" width="9" height="26"><path fill="#000" d="M1 2h7v1h-7zM1 6h7v1h-7zM0 3h1v3h-1zM8 3h1v3h-1zM1 8h7v1h-7zM8 9h1v3h-1zM6 14h1v1h-1zM8 14h1v1h-1zM6 16h1v2h-1zM1 12h7v1h-7zM0 9h1v3h-1zM8 16h1v1h-1zM6 20h1v3h-1zM0 15h9v1h-9zM1 16h2v1h-2zM3 17h2v1h-2zM5 18h2v1h-2z"/></svg>
<svg style="left:227px;top:407px" width="9" height="26"><path fill="#000" d="M1 2h7v1h-7zM1 6h7v1h-7zM0 3h1v3h-1zM8 3h1v3h-1zM1 8h7v1h-7zM0 9h1v3h-1zM8 9h1v3h-1zM7 14h2v1h-2zM6 17h1v1h-1zM1 12h7v1h-7zM0 15h1v3h-1zM8 15h1v3h-1zM1 14h3v1h-3zM7 18h2v1h-2zM4 15h1v1h-1zM5 16h1v1h-1zM6 20h1v3h-1zM1 18h1v1h-1z"/></svg>
<svg style="left:227px;top:386px" width="9" height="8"><path fill="#000" d="M1 2h7v1h-7zM1 6h7v1h-7zM0 3h1v3h-1zM8 3h1v3h-1z"/></svg>
<svg style="left:227px;top:349px" width="9" height="20"><path fill="#000" d="M1 2h7v1h-7zM1 6h7v1h-7zM0 3h1v3h-1zM8 3h1v3h-1zM1 8h7v1h-7zM0 9h1v3h-1zM8 9h1v3h-1zM7 14h2v1h-2zM1 12h7v1h-7zM0 15h1v3h-1zM8 15h1v3h-1zM1 14h3v1h-3zM7 18h2v1h-2zM4 15h1v1h-1zM5 16h1v1h-1zM6 17h1v1h-1zM1 18h1v1h-1z"/></svg>
<svg style="left:227px;top:319px" width="9" height="20"><path fill="#000" d="M1 2h7v1h-7zM1 6h7v1h-7zM0 3h1v3h-1zM8 3h1v3h-1zM1 8h7v1h-7zM8 9h1v3h-1zM6 14h1v1h-1zM8 14h1v1h-1zM1 12h7v1h-7zM0 9h1v3h-1zM8 16h1v1h-1zM6 16h1v2h-1zM0 15h9v1h-9zM1 16h2v1h-2zM3 17h2v1h-2zM5 18h2v1h-2z"/></svg>
<svg style="left:227px;top:288px" width="9" height="20"><path fill="#000" d="M1 2h7v1h-7zM1 6h7v1h-7zM0 3h1v3h-1zM8 3h1v3h-1zM1 8h7v1h-7zM0 9h1v3h-1zM8 9h1v3h-1zM1 14h1v1h-1zM1 12h7v1h-7zM0 15h1v2h-1zM8 15h1v3h-1zM1 17h1v1h-1zM4 14h4v1h-4zM3 15h1v2h-1zM4 17h1v1h-1zM2 18h6v1h-6z"/></svg>
<svg style="left:227px;top:258px" width="9" height="20"><path fill="#000" d="M1 2h7v1h-7zM1 6h7v1h-7zM0 3h1v3h-1zM8 3h1v3h-1zM1 8h7v1h-7zM0 9h1v3h-1zM8 9h1v3h-1zM3 15h1v1h-1zM5 15h1v1h-1zM1 14h2v1h-2zM6 14h2v1h-2zM1 12h7v1h-7zM0 15h1v3h-1zM8 15h1v3h-1zM1 18h2v1h-2zM6 18h2v1h-2zM3 17h1v1h-1zM5 17h1v1h-1zM4 16h1v1h-1z"/></svg>
<svg style="left:227px;top:224px" width="9" height="26"><path fill="#000" d="M1 2h7v1h-7zM1 6h7v1h-7zM0 3h1v3h-1zM8 3h1v3h-1zM1 8h7v1h-7zM1 12h7v1h-7zM0 9h1v3h-1zM8 9h1v3h-1zM1 14h7v1h-7zM8 15h1v3h-1zM8 19h1v2h-1zM1 18h7v1h-7zM0 15h1v3h-1zM8 22h1v2h-1zM0 21h9v1h-9zM1 22h1v2h-1z"/></svg>
<svg style="left:227px;top:194px" width="9" height="26"><path fill="#000" d="M1 2h7v1h-7zM1 6h7v1h-7zM0 3h1v3h-1zM8 3h1v3h-1zM1 8h7v1h-7zM0 9h1v3h-1zM8 9h1v3h-1zM7 14h2v1h-2zM8 15h1v3h-1zM1 18h1v1h-1zM8 19h1v2h-1zM1 12h7v1h-7zM0 15h1v3h-1zM8 22h1v2h-1zM1 14h3v1h-3zM7 18h2v1h-2zM4 15h1v1h-1zM5 16h1v1h-1zM6 17h1v1h-1zM1 22h1v2h-1zM0 21h9v1h-9z"/></svg>
<svg style="left:227px;top:163px" width="9" height="26"><path fill="#000" d="M1 2h7v1h-7zM1 6h7v1h-7zM0 3h1v3h-1zM8 3h1v3h-1zM1 8h7v1h-7zM8 9h1v3h-1zM6 14h1v1h-1zM8 14h1v1h-1zM8 16h1v1h-1zM0 15h9v1h-9zM8 19h1v2h-1zM1 12h7v1h-7zM0 9h1v3h-1zM8 22h1v2h-1zM6 16h1v2h-1zM0 21h9v1h-9zM1 16h2v1h-2zM3 17h2v1h-2zM5 18h2v1h-2zM1 22h1v2h-1z"/></svg>
<svg style="left:227px;top:133px" width="9" height="26"><path fill="#000" d="M1 2h7v1h-7zM1 6h7v1h-7zM0 3h1v3h-1zM8 3h1v3h-1zM1 8h7v1h-7zM0 9h1v3h-1zM8 9h1v3h-1zM1 14h1v1h-1zM8 15h1v3h-1zM1 17h1v1h-1zM8 19h1v2h-1zM1 12h7v1h-7zM0 15h1v2h-1zM8 22h1v2h-1zM1 22h1v2h-1zM4 14h4v1h-4zM3 15h1v2h-1zM4 17h1v1h-1zM2 18h6v1h-6zM0 21h9v1h-9z"/></svg>
<svg style="left:227px;top:102px" width="9" height="26"><path fill="#000" d="M1 2h7v1h-7zM1 6h7v1h-7zM0 3h1v3h-1zM8 3h1v3h-1zM1 8h7v1h-7zM0 9h1v3h-1zM8 9h1v3h-1zM3 15h1v1h-1zM5 15h1v1h-1zM1 14h2v1h-2zM6 14h2v1h-2zM8 15h1v3h-1zM8 19h1v2h-1zM1 12h7v1h-7zM0 15h1v3h-1zM8 22h1v2h-1zM1 18h2v1h-2zM6 18h2v1h-2zM3 17h1v1h-1zM5 17h1v1h-1zM4 16h1v1h-1zM0 21h9v1h-9zM1 22h1v2h-1z"/></svg>
<svg style="left:282px;top:707px" width="26" height="8"><path fill="#000" d="M3 0h1v1h-1zM22 0h3v1h-3zM21 1h1v2h-1zM25 1h1v2h-1zM19 1h1v3h-1zM3 2h1v3h-1zM9 1h1v1h-1zM15 1h1v3h-1zM16 0h3v1h-3zM22 3h3v1h-3zM3 6h1v2h-1zM10 0h3v1h-3zM16 7h3v1h-3zM22 7h3v1h-3zM2 1h2v1h-2zM9 6h1v1h-1zM13 1h1v2h-1zM15 6h1v1h-1zM19 5h1v2h-1zM21 4h1v3h-1zM25 4h1v3h-1zM1 2h1v1h-1zM0 3h1v2h-1zM12 3h1v1h-1zM11 4h1v1h-1zM16 4h4v1h-4zM0 5h5v1h-5zM10 5h1v1h-1zM7 7h1v1h-1zM9 7h5v1h-5z"/></svg>
<svg style="left:334px;top:707px" width="26" height="8"><path fill="#000" d="M3 0h1v1h-1zM13 1h1v2h-1zM3 2h1v3h-1zM9 1h1v1h-1zM10 0h3v1h-3zM16 0h3v1h-3zM22 0h3v1h-3zM3 6h1v2h-1zM10 7h3v1h-3zM16 7h3v1h-3zM22 7h3v1h-3zM2 1h2v1h-2zM9 6h1v1h-1zM13 4h1v3h-1zM15 1h1v6h-1zM19 1h1v6h-1zM21 1h1v6h-1zM25 1h1v6h-1zM1 2h1v1h-1zM0 3h1v2h-1zM11 3h2v1h-2zM0 5h5v1h-5zM7 7h1v1h-1z"/></svg>
<svg style="left:386px;top:707px" width="26" height="8"><path fill="#000" d="M3 0h1v1h-1zM13 1h1v2h-1zM3 2h1v3h-1zM9 1h1v1h-1zM21 1h1v1h-1zM10 0h3v1h-3zM16 0h3v1h-3zM3 6h1v2h-1zM10 7h3v1h-3zM16 7h3v1h-3zM22 0h3v1h-3zM2 1h2v1h-2zM9 6h1v1h-1zM13 4h1v3h-1zM15 1h1v6h-1zM19 1h1v6h-1zM21 6h1v1h-1zM25 1h1v2h-1zM1 2h1v1h-1zM0 3h1v2h-1zM11 3h2v1h-2zM24 3h1v1h-1zM23 4h1v1h-1zM0 5h5v1h-5zM22 5h1v1h-1zM7 7h1v1h-1zM21 7h5v1h-5z"/></svg>
<svg style="left:438px;top:707px" width="26" height="8"><path fill="#000" d="M3 0h1v1h-1zM24 0h1v1h-1zM13 1h1v2h-1zM3 2h1v3h-1zM9 1h1v1h-1zM24 2h1v3h-1zM10 0h3v1h-3zM16 0h3v1h-3zM3 6h1v2h-1zM10 7h3v1h-3zM16 7h3v1h-3zM24 6h1v2h-1zM2 1h2v1h-2zM9 6h1v1h-1zM13 4h1v3h-1zM15 1h1v6h-1zM19 1h1v6h-1zM23 1h2v1h-2zM1 2h1v1h-1zM22 2h1v1h-1zM0 3h1v2h-1zM11 3h2v1h-2zM21 3h1v2h-1zM0 5h5v1h-5zM21 5h5v1h-5zM7 7h1v1h-1z"/></svg>
<svg style="left:490px;top:707px" width="26" height="8"><path fill="#000" d="M3 0h1v1h-1zM13 1h1v2h-1zM21 1h1v2h-1zM25 1h1v1h-1zM3 2h1v3h-1zM9 1h1v1h-1zM10 0h3v1h-3zM16 0h3v1h-3zM22 0h3v1h-3zM3 6h1v2h-1zM10 7h3v1h-3zM16 7h3v1h-3zM22 7h3v1h-3zM2 1h2v1h-2zM9 6h1v1h-1zM13 4h1v3h-1zM15 1h1v6h-1zM19 1h1v6h-1zM21 4h1v3h-1zM25 4h1v3h-1zM1 2h1v1h-1zM0 3h1v2h-1zM11 3h2v1h-2zM21 3h4v1h-4zM0 5h5v1h-5zM7 7h1v1h-1z"/></svg>
<svg style="left:542px;top:707px" width="26" height="8"><path fill="#000" d="M3 0h1v1h-1zM22 0h3v1h-3zM13 1h1v2h-1zM21 1h1v2h-1zM25 1h1v2h-1zM3 2h1v3h-1zM9 1h1v1h-1zM10 0h3v1h-3zM16 0h3v1h-3zM22 3h3v1h-3zM3 6h1v2h-1zM10 7h3v1h-3zM16 7h3v1h-3zM22 7h3v1h-3zM2 1h2v1h-2zM9 6h1v1h-1zM13 4h1v3h-1zM15 1h1v6h-1zM19 1h1v6h-1zM21 4h1v3h-1zM25 4h1v3h-1zM1 2h1v1h-1zM0 3h1v2h-1zM11 3h2v1h-2zM0 5h5v1h-5zM7 7h1v1h-1z"/></svg>
<svg style="left:594px;top:707px" width="26" height="8"><path fill="#000" d="M3 0h1v1h-1zM17 0h1v1h-1zM13 1h1v2h-1zM3 2h1v3h-1zM9 1h1v1h-1zM10 0h3v1h-3zM22 0h3v1h-3zM3 6h1v2h-1zM10 7h3v1h-3zM17 2h1v6h-1zM22 7h3v1h-3zM2 1h2v1h-2zM9 6h1v1h-1zM13 4h1v3h-1zM16 1h2v1h-2zM21 1h1v6h-1zM25 1h1v6h-1zM1 2h1v1h-1zM0 3h1v2h-1zM11 3h2v1h-2zM0 5h5v1h-5zM7 7h1v1h-1z"/></svg>
<svg style="left:646px;top:707px" width="26" height="8"><path fill="#000" d="M3 0h1v1h-1zM17 0h1v1h-1zM13 1h1v2h-1zM3 2h1v3h-1zM9 1h1v1h-1zM21 1h1v1h-1zM10 0h3v1h-3zM3 6h1v2h-1zM10 7h3v1h-3zM17 2h1v6h-1zM22 0h3v1h-3zM2 1h2v1h-2zM9 6h1v1h-1zM13 4h1v3h-1zM16 1h2v1h-2zM21 6h1v1h-1zM25 1h1v2h-1zM1 2h1v1h-1zM0 3h1v2h-1zM11 3h2v1h-2zM24 3h1v1h-1zM23 4h1v1h-1zM0 5h5v1h-5zM22 5h1v1h-1zM7 7h1v1h-1zM21 7h5v1h-5z"/></svg>
<svg style="left:697px;top:707px" width="26" height="8"><path fill="#000" d="M3 0h1v1h-1zM17 0h1v1h-1zM24 0h1v1h-1zM13 1h1v2h-1zM3 2h1v3h-1zM9 1h1v1h-1zM24 2h1v3h-1zM10 0h3v1h-3zM3 6h1v2h-1zM10 7h3v1h-3zM17 2h1v6h-1zM24 6h1v2h-1zM2 1h2v1h-2zM9 6h1v1h-1zM13 4h1v3h-1zM16 1h2v1h-2zM23 1h2v1h-2zM1 2h1v1h-1zM22 2h1v1h-1zM0 3h1v2h-1zM11 3h2v1h-2zM21 3h1v2h-1zM0 5h5v1h-5zM21 5h5v1h-5zM7 7h1v1h-1z"/></svg>
<svg style="left:749px;top:707px" width="26" height="8"><path fill="#000" d="M3 0h1v1h-1zM17 0h1v1h-1zM13 1h1v2h-1zM21 1h1v2h-1zM25 1h1v1h-1zM3 2h1v3h-1zM9 1h1v1h-1zM10 0h3v1h-3zM22 0h3v1h-3zM3 6h1v2h-1zM10 7h3v1h-3zM17 2h1v6h-1zM22 7h3v1h-3zM2 1h2v1h-2zM9 6h1v1h-1zM13 4h1v3h-1zM16 1h2v1h-2zM21 4h1v3h-1zM25 4h1v3h-1zM1 2h1v1h-1zM0 3h1v2h-1zM11 3h2v1h-2zM21 3h4v1h-4zM0 5h5v1h-5zM7 7h1v1h-1z"/></svg>
<svg style="left:801px;top:707px" width="26" height="8"><path fill="#000" d="M3 0h1v1h-1zM17 0h1v1h-1zM22 0h3v1h-3zM13 1h1v2h-1zM21 1h1v2h-1zM25 1h1v2h-1zM3 2h1v3h-1zM9 1h1v1h-1zM10 0h3v1h-3zM22 3h3v1h-3zM3 6h1v2h-1zM10 7h3v1h-3zM17 2h1v6h-1zM22 7h3v1h-3zM2 1h2v1h-2zM9 6h1v1h-1zM13 4h1v3h-1zM16 1h2v1h-2zM21 4h1v3h-1zM25 4h1v3h-1zM1 2h1v1h-1zM0 3h1v2h-1zM11 3h2v1h-2zM0 5h5v1h-5zM7 7h1v1h-1z"/></svg>
<svg style="left:853px;top:707px" width="26" height="8"><path fill="#000" d="M3 0h1v1h-1zM13 1h1v2h-1zM3 2h1v3h-1zM9 1h1v1h-1zM15 1h1v1h-1zM10 0h3v1h-3zM22 0h3v1h-3zM3 6h1v2h-1zM10 7h3v1h-3zM16 0h3v1h-3zM22 7h3v1h-3zM2 1h2v1h-2zM9 6h1v1h-1zM13 4h1v3h-1zM15 6h1v1h-1zM19 1h1v2h-1zM21 1h1v6h-1zM25 1h1v6h-1zM1 2h1v1h-1zM0 3h1v2h-1zM11 3h2v1h-2zM18 3h1v1h-1zM17 4h1v1h-1zM0 5h5v1h-5zM16 5h1v1h-1zM7 7h1v1h-1zM15 7h5v1h-5z"/></svg>
<svg style="left:905px;top:707px" width="26" height="8"><path fill="#000" d="M3 0h1v1h-1zM13 1h1v2h-1zM3 2h1v3h-1zM9 1h1v1h-1zM15 1h1v1h-1zM21 1h1v1h-1zM10 0h3v1h-3zM3 6h1v2h-1zM10 7h3v1h-3zM16 0h3v1h-3zM22 0h3v1h-3zM2 1h2v1h-2zM9 6h1v1h-1zM13 4h1v3h-1zM15 6h1v1h-1zM19 1h1v2h-1zM21 6h1v1h-1zM25 1h1v2h-1zM1 2h1v1h-1zM0 3h1v2h-1zM11 3h2v1h-2zM18 3h1v1h-1zM24 3h1v1h-1zM17 4h1v1h-1zM23 4h1v1h-1zM0 5h5v1h-5zM16 5h1v1h-1zM22 5h1v1h-1zM7 7h1v1h-1zM15 7h5v1h-5zM21 7h5v1h-5z"/></svg>
<svg style="left:957px;top:707px" width="26" height="8"><path fill="#000" d="M3 0h1v1h-1zM24 0h1v1h-1zM13 1h1v2h-1zM3 2h1v3h-1zM9 1h1v1h-1zM15 1h1v1h-1zM24 2h1v3h-1zM10 0h3v1h-3zM3 6h1v2h-1zM10 7h3v1h-3zM16 0h3v1h-3zM24 6h1v2h-1zM2 1h2v1h-2zM9 6h1v1h-1zM13 4h1v3h-1zM15 6h1v1h-1zM19 1h1v2h-1zM23 1h2v1h-2zM1 2h1v1h-1zM22 2h1v1h-1zM0 3h1v2h-1zM11 3h2v1h-2zM18 3h1v1h-1zM21 3h1v2h-1zM17 4h1v1h-1zM0 5h5v1h-5zM16 5h1v1h-1zM21 5h5v1h-5zM7 7h1v1h-1zM15 7h5v1h-5z"/></svg>
<svg style="left:1012px;top:706px" width="5" height="8"><path fill="#000" d="M1 0h3v1h-3zM4 1h1v1h-1zM0 1h1v2h-1zM1 3h3v1h-3zM1 7h3v1h-3zM0 6h1v1h-1zM4 4h1v3h-1z"/></svg>
<div style="left:511px;top:686px;width:28px;height:17px;background:#000;"></div>
<div style="left:512px;top:687px;width:26px;height:15px;background:#ffffe1;"></div>
<svg style="left:513px;top:687px" width="24" height="20"><path fill="#000" d="M1 6h1v1h-1zM4 6h1v1h-1zM0 4h1v2h-1zM5 4h1v2h-1zM0 10h1v2h-1zM5 10h1v2h-1zM19 4h4v1h-4zM18 5h1v2h-1zM1 8h1v2h-1zM4 8h1v2h-1zM2 7h2v1h-2zM19 7h3v1h-3zM22 8h1v3h-1zM8 10h2v1h-2zM9 11h1v1h-1zM18 11h4v1h-4zM8 12h1v1h-1z"/></svg>
<div style="left:0px;top:721px;width:1024px;height:1px;background:#ffffff;"></div>
<svg style="left:2px;top:724px" width="24" height="20"><path fill="#000" d="M19 2h1v1h-1zM19 4h1v1h-1zM14 2h1v2h-1zM3 2h1v1h-1zM13 4h1v2h-1zM22 3h1v1h-1zM1 6h1v1h-1zM10 4h1v1h-1zM18 7h5v1h-5zM3 8h1v1h-1zM16 4h1v1h-1zM22 8h1v1h-1zM6 6h1v4h-1zM18 9h5v1h-5zM18 10h1v1h-1zM22 10h1v1h-1zM3 10h1v2h-1zM7 2h1v3h-1zM14 7h1v1h-1zM19 6h1v1h-1zM0 3h6v1h-6zM9 3h1v1h-1zM17 3h4v1h-4zM22 12h1v1h-1zM10 9h1v3h-1zM13 8h1v1h-1zM16 10h1v1h-1zM21 4h1v1h-1zM1 5h10v1h-10zM15 5h1v1h-1zM17 5h6v1h-6zM1 9h1v2h-1zM4 6h1v1h-1zM6 11h1v1h-1zM8 6h1v6h-1zM12 6h3v1h-3zM1 7h4v1h-4zM18 11h5v1h-5zM17 8h2v1h-2zM3 9h2v1h-2zM12 9h4v1h-4zM5 10h2v1h-2zM18 12h1v1h-1zM0 11h1v1h-1zM14 11h2v1h-2zM2 12h2v1h-2zM5 12h1v1h-1zM9 12h2v1h-2zM12 12h2v1h-2z"/></svg>
<div style="left:930px;top:724px;width:29px;height:1px;background:#808080;"></div>
<div style="left:930px;top:724px;width:1px;height:15px;background:#808080;"></div>
<div style="left:930px;top:739px;width:30px;height:1px;background:#ffffff;"></div>
<div style="left:959px;top:724px;width:1px;height:16px;background:#ffffff;"></div>
<div style="left:962px;top:724px;width:29px;height:1px;background:#808080;"></div>
<div style="left:962px;top:724px;width:1px;height:15px;background:#808080;"></div>
<div style="left:962px;top:739px;width:30px;height:1px;background:#ffffff;"></div>
<div style="left:991px;top:724px;width:1px;height:16px;background:#ffffff;"></div>
<svg style="left:964px;top:724px" width="24" height="20"><path fill="#000" d="M1 3h1v1h-1zM3 3h2v1h-2zM7 2h1v2h-1zM0 2h1v1h-1zM3 2h1v1h-1zM5 2h1v1h-1zM17 2h1v1h-1zM0 4h6v1h-6zM17 7h1v1h-1zM3 7h1v1h-1zM7 6h1v4h-1zM9 5h1v5h-1zM0 7h1v1h-1zM3 11h1v1h-1zM5 7h1v1h-1zM7 11h1v1h-1zM17 9h1v3h-1zM1 6h1v1h-1zM3 6h2v1h-2zM13 3h10v1h-10zM0 8h6v1h-6zM7 4h4v1h-4zM13 4h1v1h-1zM22 4h1v1h-1zM2 5h2v1h-2zM6 5h2v1h-2zM9 11h1v1h-1zM12 5h1v1h-1zM15 5h5v1h-5zM21 5h1v1h-1zM18 6h1v1h-1zM12 8h11v1h-11zM2 9h1v1h-1zM4 9h1v2h-1zM1 10h2v1h-2zM8 10h1v1h-1zM0 12h3v1h-3zM4 12h3v1h-3zM10 12h1v1h-1zM15 12h3v1h-3z"/></svg>
<div style="left:994px;top:724px;width:29px;height:1px;background:#808080;"></div>
<div style="left:994px;top:724px;width:1px;height:15px;background:#808080;"></div>
<div style="left:994px;top:739px;width:30px;height:1px;background:#ffffff;"></div>
<div style="left:1023px;top:724px;width:1px;height:16px;background:#ffffff;"></div>
<div style="left:0px;top:742px;width:1024px;height:1px;background:#ffffff;"></div>
</body></html>
